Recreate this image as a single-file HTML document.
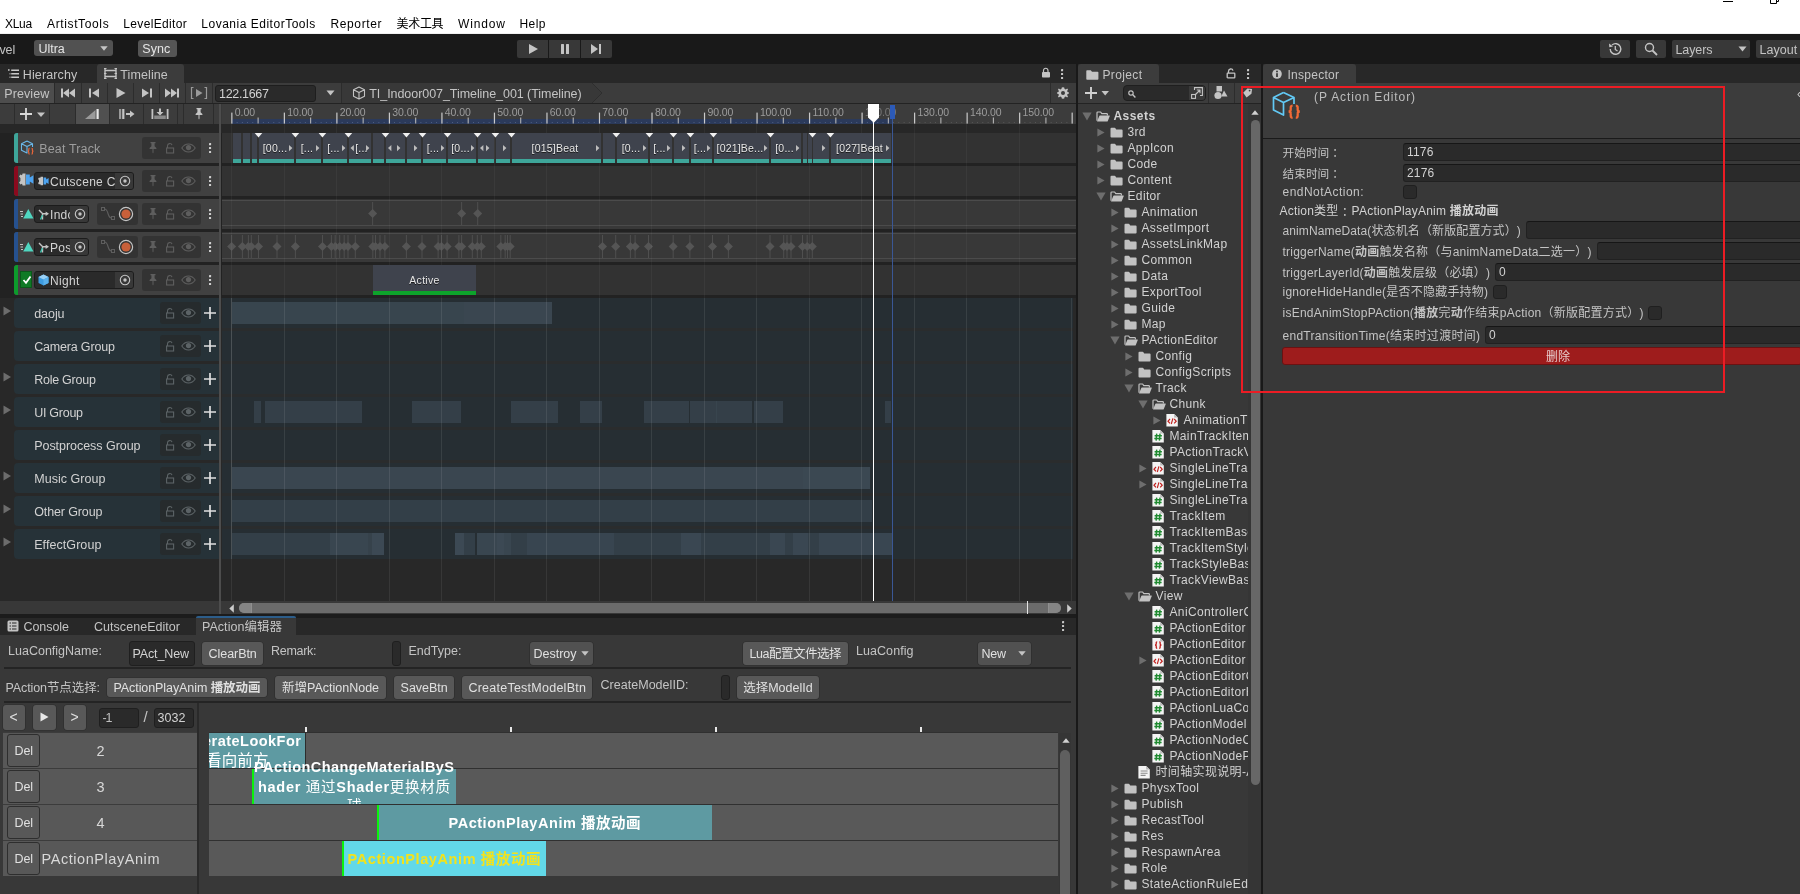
<!DOCTYPE html><html><head><meta charset="utf-8"><title>Unity</title><style>
*{box-sizing:border-box;margin:0;padding:0}
html,body{width:1800px;height:894px;overflow:hidden;background:#383838}
body{position:relative;will-change:transform;text-spacing-trim:space-all;font-family:"Liberation Sans","Noto Sans CJK SC",sans-serif;font-size:12px;color:#c8c8c8}
div,span.t,svg{position:absolute}
svg{overflow:visible}
span.t{white-space:nowrap;display:block}
.btn{background:#585858;border-radius:3px;border:1px solid #303030;color:#e4e4e4;text-align:center;white-space:nowrap;overflow:hidden}
.fld{background:#2a2a2a;border-radius:3px;border:1px solid #212121;color:#d2d2d2;white-space:nowrap;overflow:hidden}
</style></head><body>
<div style="left:0px;top:0px;width:1800px;height:34px;background:#ffffff;border-bottom:1px solid #f0f0f0"></div>
<span class="t" style="left:5px;top:16px;font-size:12px;line-height:16px;color:#000000;letter-spacing:-0.28px;">XLua</span>
<span class="t" style="left:47px;top:16px;font-size:12px;line-height:16px;color:#000000;letter-spacing:0.63px;">ArtistTools</span>
<span class="t" style="left:123.3px;top:16px;font-size:12px;line-height:16px;color:#000000;letter-spacing:0.33px;">LevelEditor</span>
<span class="t" style="left:201.3px;top:16px;font-size:12px;line-height:16px;color:#000000;letter-spacing:0.51px;">Lovania EditorTools</span>
<span class="t" style="left:330.5px;top:16px;font-size:12px;line-height:16px;color:#000000;letter-spacing:0.62px;">Reporter</span>
<span class="t" style="left:396.6px;top:16px;font-size:12px;line-height:16px;color:#000000;letter-spacing:-0.34px;">美术工具</span>
<span class="t" style="left:458px;top:16px;font-size:12px;line-height:16px;color:#000000;letter-spacing:0.86px;">Window</span>
<span class="t" style="left:519.5px;top:16px;font-size:12px;line-height:16px;color:#000000;letter-spacing:0.44px;">Help</span>
<div style="left:1723px;top:1px;width:10px;height:1.2px;background:#000;"></div>
<svg style="left:1764.5px;top:-2.5px;" width="14" height="8" viewBox="0 0 14 8"><path d="M5.5 0 V5.5 H11.5 V0 M8 0 H13.5 V3.5 H11.5" fill="none" stroke="#000" stroke-width="1"/></svg>
<div style="left:0px;top:34px;width:1800px;height:30px;background:#191919;"></div>
<span class="t" style="left:-14.3px;top:41.5px;font-size:12.5px;line-height:16px;color:#c4c4c4;letter-spacing:-0.10px;">Level</span>
<div style="left:34.3px;top:40px;width:79px;height:16.3px;background:#515151;border-radius:3px"></div>
<span class="t" style="left:38.5px;top:40.5px;font-size:12.5px;line-height:16px;color:#e4e4e4;letter-spacing:-0.03px;">Ultra</span>
<svg style="left:100px;top:46px;" width="8" height="5" viewBox="0 0 8 5"><path d="M0.3 0.3 H7.7 L4 4.7Z" fill="#c4c4c4"/></svg>
<div style="left:137.5px;top:40px;width:39.8px;height:17px;background:#555555;border-radius:3px"></div>
<span class="t" style="left:142.3px;top:41px;font-size:12.5px;line-height:16px;color:#e4e4e4;letter-spacing:0.07px;">Sync</span>
<div style="left:517px;top:40px;width:31px;height:18px;background:#383838;border-radius:2px 0 0 2px"></div>
<div style="left:549px;top:40px;width:31px;height:18px;background:#383838;border-radius:0"></div>
<div style="left:581px;top:40px;width:31px;height:18px;background:#383838;border-radius:0 2px 2px 0"></div>
<svg style="left:527px;top:43px;" width="12" height="12" viewBox="0 0 12 12"><path d="M2 1 L11 6 L2 11Z" fill="#c4c4c4"/></svg>
<svg style="left:559px;top:43px;" width="12" height="12" viewBox="0 0 12 12"><rect x="2" y="1" width="3" height="10" rx="0.5" fill="#c4c4c4"/><rect x="7" y="1" width="3" height="10" rx="0.5" fill="#c4c4c4"/></svg>
<svg style="left:590px;top:43px;" width="13" height="12" viewBox="0 0 13 12"><path d="M1 1 L8 6 L1 11Z" fill="#c4c4c4"/><rect x="9" y="1" width="2" height="10" fill="#c4c4c4"/></svg>
<div style="left:1600px;top:40px;width:30px;height:18px;background:#383838;border-radius:2px"></div>
<svg style="left:1607px;top:41px;" width="16" height="16" viewBox="0 0 16 16"><path d="M3.2 8 A5.3 5.3 0 1 0 5 4" fill="none" stroke="#c4c4c4" stroke-width="1.4"/><path d="M2 2.5 L2.3 6.3 L6 5.5Z" fill="#c4c4c4"/><path d="M8.3 5 V8.5 L10.5 10" fill="none" stroke="#c4c4c4" stroke-width="1.3"/></svg>
<div style="left:1636px;top:40px;width:30px;height:18px;background:#383838;border-radius:2px"></div>
<svg style="left:1643px;top:41px;" width="16" height="16" viewBox="0 0 16 16"><circle cx="6.5" cy="6.5" r="4" fill="none" stroke="#c4c4c4" stroke-width="1.4"/><path d="M9.5 9.5 L14 14" stroke="#c4c4c4" stroke-width="1.8"/></svg>
<div style="left:1672px;top:40px;width:78px;height:18px;background:#383838;border-radius:2px"><span class="t" style="left:3.4px;top:1.5px;font-size:12.5px;line-height:16px;color:#c4c4c4;letter-spacing:-0.07px;">Layers</span><svg style="left:66px;top:6px;" width="9" height="6" viewBox="0 0 9 6"><path d="M0.5 0.5 H8.5 L4.5 5.5Z" fill="#c4c4c4"/></svg></div>
<div style="left:1756px;top:40px;width:50px;height:18px;background:#383838;border-radius:2px"><span class="t" style="left:3.4px;top:1.5px;font-size:12.5px;line-height:16px;color:#c4c4c4;letter-spacing:0.05px;">Layout</span></div>
<div style="left:0px;top:64px;width:1076px;height:19px;background:#282828;"></div>
<div style="left:1076px;top:64px;width:3px;height:830px;background:#191919;"></div>
<svg style="left:7.5px;top:69px;" width="12" height="10" viewBox="0 0 12 10"><path d="M0 1 H1.6 M3.2 1.3 H11 M3.2 4.8 H11 M3.2 8.3 H11 M1.6 4.8 H2.4 M1.6 8.3 H2.4" stroke="#c8c8c8" stroke-width="1.45"/></svg>
<span class="t" style="left:22.8px;top:67px;font-size:12.5px;line-height:16px;color:#c4c4c4;letter-spacing:0.12px;">Hierarchy</span>
<div style="left:97px;top:64px;width:87px;height:19px;background:#3c3c3c;border-radius:3px 3px 0 0"></div>
<svg style="left:104px;top:68px;" width="13" height="11" viewBox="0 0 13 11"><path d="M1 0 V11 M12 0 V11 M1 2.5 H12 M1 8.5 H12" stroke="#c4c4c4" stroke-width="1.4" fill="none"/><path d="M0 0.5 H2.5 M0 5.5 H2.5 M0 10.5 H2.5 M10.5 0.5 H13 M10.5 5.5 H13 M10.5 10.5 H13" stroke="#c4c4c4" stroke-width="1"/></svg>
<span class="t" style="left:120.3px;top:67px;font-size:12.5px;line-height:16px;color:#c4c4c4;letter-spacing:0.10px;">Timeline</span>
<svg style="left:1041px;top:67px;" width="10" height="11" viewBox="0 0 10 11"><path d="M2.5 5 V3.5 A2.2 2.2 0 0 1 7 3.5 V5" fill="none" stroke="#c4c4c4" stroke-width="1.2"/><rect x="1" y="5" width="8" height="5.5" rx="0.8" fill="#c4c4c4"/></svg>
<svg style="left:1061px;top:68.5px;" width="3" height="11" viewBox="0 0 3 11"><rect x="0" y="0.1" width="2.1" height="2.1" rx="0.3" fill="#c4c4c4"/><rect x="0" y="4" width="2.1" height="2.1" rx="0.3" fill="#c4c4c4"/><rect x="0" y="7.9" width="2.1" height="2.1" rx="0.3" fill="#c4c4c4"/></svg>
<div style="left:0px;top:83px;width:1076px;height:21px;background:#3c3c3c;border-bottom:1px solid #232323"></div>
<div style="left:0px;top:83px;width:55px;height:20px;background:#4d4d4d;border-right:1px solid #2a2a2a"></div>
<span class="t" style="left:4.3px;top:85.5px;font-size:12.5px;line-height:16px;color:#c4c4c4;letter-spacing:0.09px;">Preview</span>
<div style="left:81px;top:83px;width:1px;height:20px;background:#2c2c2c;"></div>
<div style="left:107px;top:83px;width:1px;height:20px;background:#2c2c2c;"></div>
<div style="left:133px;top:83px;width:1px;height:20px;background:#2c2c2c;"></div>
<div style="left:159px;top:83px;width:1px;height:20px;background:#2c2c2c;"></div>
<div style="left:185px;top:83px;width:1px;height:20px;background:#2c2c2c;"></div>
<div style="left:212px;top:83px;width:1px;height:20px;background:#2c2c2c;"></div>
<svg style="left:60px;top:87px;" width="16" height="12" viewBox="0 0 16 12"><rect x="1" y="1.5" width="2" height="9" fill="#c4c4c4"/><path d="M9 1.5 V10.5 L3 6Z M15 1.5 V10.5 L9 6Z" fill="#c4c4c4"/></svg>
<svg style="left:88px;top:87px;" width="13" height="12" viewBox="0 0 13 12"><rect x="1" y="1.5" width="2" height="9" fill="#c4c4c4"/><path d="M11 1.5 V10.5 L4 6Z" fill="#c4c4c4"/></svg>
<svg style="left:115px;top:87px;" width="12" height="12" viewBox="0 0 12 12"><path d="M1.5 1 L10.5 6 L1.5 11Z" fill="#c4c4c4"/></svg>
<svg style="left:140px;top:87px;" width="13" height="12" viewBox="0 0 13 12"><path d="M2 1.5 V10.5 L9 6Z" fill="#c4c4c4"/><rect x="10" y="1.5" width="2" height="9" fill="#c4c4c4"/></svg>
<svg style="left:164px;top:87px;" width="16" height="12" viewBox="0 0 16 12"><path d="M1 1.5 V10.5 L7 6Z M7 1.5 V10.5 L13 6Z" fill="#c4c4c4"/><rect x="13" y="1.5" width="2" height="9" fill="#c4c4c4"/></svg>
<svg style="left:190px;top:86px;" width="18" height="14" viewBox="0 0 18 14"><path d="M3.5 1.5 H1.5 V12.5 H3.5 M14.5 1.5 H16.5 V12.5 H14.5" fill="none" stroke="#9a9a9a" stroke-width="1.2"/><path d="M6 3 V11 L12.5 7Z" fill="#9a9a9a"/></svg>
<div style="left:215px;top:85px;width:100.5px;height:17px;background:#2a2a2a;border-radius:3px;border:1px solid #1e1e1e"><span class="t" style="left:3px;top:-0.5px;font-size:12.5px;line-height:16px;color:#d2d2d2;letter-spacing:-0.31px;">122.1667</span></div>
<svg style="left:326px;top:90px;" width="9" height="6" viewBox="0 0 9 6"><path d="M0.5 0.5 H8.5 L4.5 5.5Z" fill="#c4c4c4"/></svg>
<div style="left:341px;top:83px;width:1px;height:20px;background:#2c2c2c;"></div>
<svg style="left:342px;top:83px;" width="262" height="20" viewBox="0 0 262 20"><path d="M0 0 H250 L260 10 L250 20 H0Z" fill="#383838"/><path d="M250 0 L260 10 L250 20" fill="none" stroke="#2e2e2e" stroke-width="1"/></svg>
<svg style="left:352px;top:86px;" width="14" height="14" viewBox="0 0 14 14"><path d="M7 1 L12.5 3.8 V10.2 L7 13 L1.5 10.2 V3.8Z M1.5 3.8 L7 6.6 L12.5 3.8 M7 6.6 V13" fill="none" stroke="#c4c4c4" stroke-width="1.1" stroke-linejoin="round"/></svg>
<span class="t" style="left:369.3px;top:85.5px;font-size:12.5px;line-height:16px;color:#c4c4c4;letter-spacing:-0.06px;">TI_Indoor007_Timeline_001 (Timeline)</span>
<div style="left:1050px;top:83px;width:1px;height:20px;background:#2c2c2c;"></div>
<svg style="left:1057px;top:87px;" width="12" height="12" viewBox="0 0 12 12"><path d="M6 0.3 L7.2 0.4 L7.6 2 L8.8 2.5 L10.2 1.6 L11 2.5 L10.1 3.9 L10.6 5 L12 5.4 V6.6 L10.6 7 L10.1 8.1 L11 9.5 L10.2 10.4 L8.8 9.5 L7.6 10 L7.2 11.6 L6 11.7 L4.8 11.6 L4.4 10 L3.2 9.5 L1.8 10.4 L1 9.5 L1.9 8.1 L1.4 7 L0 6.6 V5.4 L1.4 5 L1.9 3.9 L1 2.5 L1.8 1.6 L3.2 2.5 L4.4 2 L4.8 0.4Z" fill="#c4c4c4"/><circle cx="6" cy="6" r="2" fill="#3c3c3c"/></svg>
<div style="left:0px;top:104px;width:220px;height:20px;background:#3c3c3c;"></div>
<div style="left:14px;top:104px;width:1px;height:20px;background:#2c2c2c;"></div>
<div style="left:49px;top:104px;width:1px;height:20px;background:#2c2c2c;"></div>
<div style="left:75px;top:104px;width:1px;height:20px;background:#2c2c2c;"></div>
<div style="left:109px;top:104px;width:1px;height:20px;background:#2c2c2c;"></div>
<div style="left:143px;top:104px;width:1px;height:20px;background:#2c2c2c;"></div>
<div style="left:177px;top:104px;width:1px;height:20px;background:#2c2c2c;"></div>
<div style="left:183px;top:104px;width:1px;height:20px;background:#2c2c2c;"></div>
<div style="left:213px;top:104px;width:1px;height:20px;background:#2c2c2c;"></div>
<div style="left:76px;top:104px;width:33px;height:20px;background:#505050;"></div>
<svg style="left:19px;top:107px;" width="30" height="14" viewBox="0 0 30 14"><path d="M1 7 H13 M7 1 V13" stroke="#d8d8d8" stroke-width="1.8"/><path d="M18 5.5 H26 L22 10Z" fill="#c4c4c4"/></svg>
<svg style="left:84px;top:107px;" width="16" height="14" viewBox="0 0 16 14"><path d="M1 12 L11.5 3 V12Z" fill="#9a9a9a"/><rect x="12.5" y="2" width="2.2" height="10" fill="#e8e8e8"/></svg>
<svg style="left:118px;top:107px;" width="18" height="14" viewBox="0 0 18 14"><rect x="1" y="2" width="2.2" height="10" fill="#9a9a9a"/><rect x="4.2" y="2" width="2.2" height="10" fill="#c4c4c4"/><path d="M8 6 H12 V3.5 L16.5 7 L12 10.5 V8 H8Z" fill="#c4c4c4"/></svg>
<svg style="left:151px;top:107px;" width="18" height="14" viewBox="0 0 18 14"><rect x="0.5" y="2" width="1.8" height="10" fill="#c4c4c4"/><rect x="15.7" y="2" width="1.8" height="10" fill="#c4c4c4"/><rect x="3.2" y="8.5" width="11.6" height="3.5" fill="#8a8a8a"/><path d="M8 1.5 H10 V5 H12.5 L9 8.5 L5.5 5 H8Z" fill="#c4c4c4"/></svg>
<svg style="left:193px;top:107.3px;" width="12" height="14" viewBox="0 0 12 14"><path d="M3.5 1 H8.5 V2.2 H7.6 V5.2 L9.4 7 V8 H6.5 V11.5 L6 12.5 L5.5 11.5 V8 H2.6 V7 L4.4 5.2 V2.2 H3.5Z" fill="#c4c4c4"/></svg>
<div style="left:0px;top:124px;width:1076px;height:490px;background:#282828;"></div>
<div style="left:222px;top:104px;width:854px;height:20px;background:#3c3c3c;"></div>
<div style="left:232px;top:119px;width:660px;height:5px;background:#2b3a5b;"></div>
<svg style="left:222px;top:104px;" width="854" height="20" viewBox="0 0 854 20"><rect x="14.7" y="18" width="0.8" height="1" fill="#56668a"/><rect x="19.9" y="18" width="0.8" height="1" fill="#56668a"/><rect x="25.2" y="18" width="0.8" height="1" fill="#56668a"/><rect x="30.4" y="18" width="0.8" height="1" fill="#56668a"/><rect x="40.9" y="18" width="0.8" height="1" fill="#56668a"/><rect x="46.2" y="18" width="0.8" height="1" fill="#56668a"/><rect x="51.4" y="18" width="0.8" height="1" fill="#56668a"/><rect x="56.7" y="18" width="0.8" height="1" fill="#56668a"/><rect x="67.2" y="18" width="0.8" height="1" fill="#56668a"/><rect x="72.4" y="18" width="0.8" height="1" fill="#56668a"/><rect x="77.7" y="18" width="0.8" height="1" fill="#56668a"/><rect x="82.9" y="18" width="0.8" height="1" fill="#56668a"/><rect x="93.4" y="18" width="0.8" height="1" fill="#56668a"/><rect x="98.7" y="18" width="0.8" height="1" fill="#56668a"/><rect x="103.9" y="18" width="0.8" height="1" fill="#56668a"/><rect x="109.2" y="18" width="0.8" height="1" fill="#56668a"/><rect x="119.7" y="18" width="0.8" height="1" fill="#56668a"/><rect x="124.9" y="18" width="0.8" height="1" fill="#56668a"/><rect x="130.2" y="18" width="0.8" height="1" fill="#56668a"/><rect x="135.4" y="18" width="0.8" height="1" fill="#56668a"/><rect x="146.0" y="18" width="0.8" height="1" fill="#56668a"/><rect x="151.2" y="18" width="0.8" height="1" fill="#56668a"/><rect x="156.5" y="18" width="0.8" height="1" fill="#56668a"/><rect x="161.7" y="18" width="0.8" height="1" fill="#56668a"/><rect x="172.2" y="18" width="0.8" height="1" fill="#56668a"/><rect x="177.5" y="18" width="0.8" height="1" fill="#56668a"/><rect x="182.7" y="18" width="0.8" height="1" fill="#56668a"/><rect x="188.0" y="18" width="0.8" height="1" fill="#56668a"/><rect x="198.5" y="18" width="0.8" height="1" fill="#56668a"/><rect x="203.7" y="18" width="0.8" height="1" fill="#56668a"/><rect x="209.0" y="18" width="0.8" height="1" fill="#56668a"/><rect x="214.2" y="18" width="0.8" height="1" fill="#56668a"/><rect x="224.7" y="18" width="0.8" height="1" fill="#56668a"/><rect x="230.0" y="18" width="0.8" height="1" fill="#56668a"/><rect x="235.2" y="18" width="0.8" height="1" fill="#56668a"/><rect x="240.5" y="18" width="0.8" height="1" fill="#56668a"/><rect x="251.0" y="18" width="0.8" height="1" fill="#56668a"/><rect x="256.2" y="18" width="0.8" height="1" fill="#56668a"/><rect x="261.5" y="18" width="0.8" height="1" fill="#56668a"/><rect x="266.7" y="18" width="0.8" height="1" fill="#56668a"/><rect x="277.3" y="18" width="0.8" height="1" fill="#56668a"/><rect x="282.5" y="18" width="0.8" height="1" fill="#56668a"/><rect x="287.8" y="18" width="0.8" height="1" fill="#56668a"/><rect x="293.0" y="18" width="0.8" height="1" fill="#56668a"/><rect x="303.5" y="18" width="0.8" height="1" fill="#56668a"/><rect x="308.8" y="18" width="0.8" height="1" fill="#56668a"/><rect x="314.0" y="18" width="0.8" height="1" fill="#56668a"/><rect x="319.3" y="18" width="0.8" height="1" fill="#56668a"/><rect x="329.8" y="18" width="0.8" height="1" fill="#56668a"/><rect x="335.0" y="18" width="0.8" height="1" fill="#56668a"/><rect x="340.3" y="18" width="0.8" height="1" fill="#56668a"/><rect x="345.5" y="18" width="0.8" height="1" fill="#56668a"/><rect x="356.0" y="18" width="0.8" height="1" fill="#56668a"/><rect x="361.3" y="18" width="0.8" height="1" fill="#56668a"/><rect x="366.5" y="18" width="0.8" height="1" fill="#56668a"/><rect x="371.8" y="18" width="0.8" height="1" fill="#56668a"/><rect x="382.3" y="18" width="0.8" height="1" fill="#56668a"/><rect x="387.5" y="18" width="0.8" height="1" fill="#56668a"/><rect x="392.8" y="18" width="0.8" height="1" fill="#56668a"/><rect x="398.0" y="18" width="0.8" height="1" fill="#56668a"/><rect x="408.6" y="18" width="0.8" height="1" fill="#56668a"/><rect x="413.8" y="18" width="0.8" height="1" fill="#56668a"/><rect x="419.1" y="18" width="0.8" height="1" fill="#56668a"/><rect x="424.3" y="18" width="0.8" height="1" fill="#56668a"/><rect x="434.8" y="18" width="0.8" height="1" fill="#56668a"/><rect x="440.1" y="18" width="0.8" height="1" fill="#56668a"/><rect x="445.3" y="18" width="0.8" height="1" fill="#56668a"/><rect x="450.6" y="18" width="0.8" height="1" fill="#56668a"/><rect x="461.1" y="18" width="0.8" height="1" fill="#56668a"/><rect x="466.3" y="18" width="0.8" height="1" fill="#56668a"/><rect x="471.6" y="18" width="0.8" height="1" fill="#56668a"/><rect x="476.8" y="18" width="0.8" height="1" fill="#56668a"/><rect x="487.3" y="18" width="0.8" height="1" fill="#56668a"/><rect x="492.6" y="18" width="0.8" height="1" fill="#56668a"/><rect x="497.8" y="18" width="0.8" height="1" fill="#56668a"/><rect x="503.1" y="18" width="0.8" height="1" fill="#56668a"/><rect x="513.6" y="18" width="0.8" height="1" fill="#56668a"/><rect x="518.8" y="18" width="0.8" height="1" fill="#56668a"/><rect x="524.1" y="18" width="0.8" height="1" fill="#56668a"/><rect x="529.3" y="18" width="0.8" height="1" fill="#56668a"/><rect x="539.9" y="18" width="0.8" height="1" fill="#56668a"/><rect x="545.1" y="18" width="0.8" height="1" fill="#56668a"/><rect x="550.4" y="18" width="0.8" height="1" fill="#56668a"/><rect x="555.6" y="18" width="0.8" height="1" fill="#56668a"/><rect x="566.1" y="18" width="0.8" height="1" fill="#56668a"/><rect x="571.4" y="18" width="0.8" height="1" fill="#56668a"/><rect x="576.6" y="18" width="0.8" height="1" fill="#56668a"/><rect x="581.9" y="18" width="0.8" height="1" fill="#56668a"/><rect x="592.4" y="18" width="0.8" height="1" fill="#56668a"/><rect x="597.6" y="18" width="0.8" height="1" fill="#56668a"/><rect x="602.9" y="18" width="0.8" height="1" fill="#56668a"/><rect x="608.1" y="18" width="0.8" height="1" fill="#56668a"/><rect x="618.6" y="18" width="0.8" height="1" fill="#56668a"/><rect x="623.9" y="18" width="0.8" height="1" fill="#56668a"/><rect x="629.1" y="18" width="0.8" height="1" fill="#56668a"/><rect x="634.4" y="18" width="0.8" height="1" fill="#56668a"/><rect x="644.9" y="18" width="0.8" height="1" fill="#56668a"/><rect x="650.1" y="18" width="0.8" height="1" fill="#56668a"/><rect x="655.4" y="18" width="0.8" height="1" fill="#56668a"/><rect x="660.6" y="18" width="0.8" height="1" fill="#56668a"/><rect x="671.2" y="18" width="0.8" height="1" fill="#5c5c5c"/><rect x="676.4" y="18" width="0.8" height="1" fill="#5c5c5c"/><rect x="681.7" y="18" width="0.8" height="1" fill="#5c5c5c"/><rect x="686.9" y="18" width="0.8" height="1" fill="#5c5c5c"/><rect x="697.4" y="18" width="0.8" height="1" fill="#5c5c5c"/><rect x="702.7" y="18" width="0.8" height="1" fill="#5c5c5c"/><rect x="707.9" y="18" width="0.8" height="1" fill="#5c5c5c"/><rect x="713.2" y="18" width="0.8" height="1" fill="#5c5c5c"/><rect x="723.7" y="18" width="0.8" height="1" fill="#5c5c5c"/><rect x="728.9" y="18" width="0.8" height="1" fill="#5c5c5c"/><rect x="734.2" y="18" width="0.8" height="1" fill="#5c5c5c"/><rect x="739.4" y="18" width="0.8" height="1" fill="#5c5c5c"/><rect x="749.9" y="18" width="0.8" height="1" fill="#5c5c5c"/><rect x="755.2" y="18" width="0.8" height="1" fill="#5c5c5c"/><rect x="760.4" y="18" width="0.8" height="1" fill="#5c5c5c"/><rect x="765.7" y="18" width="0.8" height="1" fill="#5c5c5c"/><rect x="776.2" y="18" width="0.8" height="1" fill="#5c5c5c"/><rect x="781.4" y="18" width="0.8" height="1" fill="#5c5c5c"/><rect x="786.7" y="18" width="0.8" height="1" fill="#5c5c5c"/><rect x="791.9" y="18" width="0.8" height="1" fill="#5c5c5c"/><rect x="802.5" y="18" width="0.8" height="1" fill="#5c5c5c"/><rect x="807.7" y="18" width="0.8" height="1" fill="#5c5c5c"/><rect x="813.0" y="18" width="0.8" height="1" fill="#5c5c5c"/><rect x="818.2" y="18" width="0.8" height="1" fill="#5c5c5c"/><rect x="828.7" y="18" width="0.8" height="1" fill="#5c5c5c"/><rect x="834.0" y="18" width="0.8" height="1" fill="#5c5c5c"/><rect x="839.2" y="18" width="0.8" height="1" fill="#5c5c5c"/><rect x="844.5" y="18" width="0.8" height="1" fill="#5c5c5c"/><rect x="9.25" y="8.6" width="1.2" height="11" fill="#cacaca"/><rect x="35.56" y="13.5" width="1.1" height="6" fill="#b4b4b4"/><rect x="61.77" y="8.6" width="1.2" height="11" fill="#cacaca"/><rect x="88.08" y="13.5" width="1.1" height="6" fill="#b4b4b4"/><rect x="114.29" y="8.6" width="1.2" height="11" fill="#cacaca"/><rect x="140.60" y="13.5" width="1.1" height="6" fill="#b4b4b4"/><rect x="166.81" y="8.6" width="1.2" height="11" fill="#cacaca"/><rect x="193.12" y="13.5" width="1.1" height="6" fill="#b4b4b4"/><rect x="219.33" y="8.6" width="1.2" height="11" fill="#cacaca"/><rect x="245.64" y="13.5" width="1.1" height="6" fill="#b4b4b4"/><rect x="271.85" y="8.6" width="1.2" height="11" fill="#cacaca"/><rect x="298.16" y="13.5" width="1.1" height="6" fill="#b4b4b4"/><rect x="324.37" y="8.6" width="1.2" height="11" fill="#cacaca"/><rect x="350.68" y="13.5" width="1.1" height="6" fill="#b4b4b4"/><rect x="376.89" y="8.6" width="1.2" height="11" fill="#cacaca"/><rect x="403.20" y="13.5" width="1.1" height="6" fill="#b4b4b4"/><rect x="429.41" y="8.6" width="1.2" height="11" fill="#cacaca"/><rect x="455.72" y="13.5" width="1.1" height="6" fill="#b4b4b4"/><rect x="481.93" y="8.6" width="1.2" height="11" fill="#cacaca"/><rect x="508.24" y="13.5" width="1.1" height="6" fill="#b4b4b4"/><rect x="534.45" y="8.6" width="1.2" height="11" fill="#cacaca"/><rect x="560.76" y="13.5" width="1.1" height="6" fill="#b4b4b4"/><rect x="586.97" y="8.6" width="1.2" height="11" fill="#cacaca"/><rect x="613.28" y="13.5" width="1.1" height="6" fill="#b4b4b4"/><rect x="639.49" y="8.6" width="1.2" height="11" fill="#cacaca"/><rect x="665.80" y="13.5" width="1.1" height="6" fill="#b4b4b4"/><rect x="692.01" y="8.6" width="1.2" height="11" fill="#cacaca"/><rect x="718.32" y="13.5" width="1.1" height="6" fill="#b4b4b4"/><rect x="744.53" y="8.6" width="1.2" height="11" fill="#cacaca"/><rect x="770.84" y="13.5" width="1.1" height="6" fill="#b4b4b4"/><rect x="797.05" y="8.6" width="1.2" height="11" fill="#cacaca"/><rect x="823.36" y="13.5" width="1.1" height="6" fill="#b4b4b4"/><rect x="849.57" y="8.6" width="1.2" height="11" fill="#cacaca"/></svg>
<span class="t" style="left:234.7px;top:106px;font-size:10.5px;line-height:12px;color:#9c9c9c;letter-spacing:0.02px;">0.00</span>
<span class="t" style="left:287.2px;top:106px;font-size:10.5px;line-height:12px;color:#9c9c9c;letter-spacing:-0.07px;">10.00</span>
<span class="t" style="left:339.7px;top:106px;font-size:10.5px;line-height:12px;color:#9c9c9c;letter-spacing:-0.07px;">20.00</span>
<span class="t" style="left:392.3px;top:106px;font-size:10.5px;line-height:12px;color:#9c9c9c;letter-spacing:-0.07px;">30.00</span>
<span class="t" style="left:444.8px;top:106px;font-size:10.5px;line-height:12px;color:#9c9c9c;letter-spacing:-0.07px;">40.00</span>
<span class="t" style="left:497.3px;top:106px;font-size:10.5px;line-height:12px;color:#9c9c9c;letter-spacing:-0.07px;">50.00</span>
<span class="t" style="left:549.8px;top:106px;font-size:10.5px;line-height:12px;color:#9c9c9c;letter-spacing:-0.07px;">60.00</span>
<span class="t" style="left:602.3px;top:106px;font-size:10.5px;line-height:12px;color:#9c9c9c;letter-spacing:-0.07px;">70.00</span>
<span class="t" style="left:654.9px;top:106px;font-size:10.5px;line-height:12px;color:#9c9c9c;letter-spacing:-0.07px;">80.00</span>
<span class="t" style="left:707.4px;top:106px;font-size:10.5px;line-height:12px;color:#9c9c9c;letter-spacing:-0.07px;">90.00</span>
<span class="t" style="left:759.9px;top:106px;font-size:10.5px;line-height:12px;color:#9c9c9c;letter-spacing:-0.12px;">100.00</span>
<span class="t" style="left:812.4px;top:106px;font-size:10.5px;line-height:12px;color:#9c9c9c;letter-spacing:0.03px;">110.00</span>
<span class="t" style="left:917.5px;top:106px;font-size:10.5px;line-height:12px;color:#9c9c9c;letter-spacing:-0.12px;">130.00</span>
<span class="t" style="left:970.0px;top:106px;font-size:10.5px;line-height:12px;color:#9c9c9c;letter-spacing:-0.12px;">140.00</span>
<span class="t" style="left:1022.5px;top:106px;font-size:10.5px;line-height:12px;color:#9c9c9c;letter-spacing:-0.12px;">150.00</span>
<span class="t" style="left:864.9px;top:106px;font-size:10.5px;line-height:12px;color:#777;letter-spacing:-0.12px;">120.00</span>
<div style="left:0px;top:124px;width:1076px;height:9px;background:#272727;"></div>
<div style="left:0px;top:133px;width:1076px;height:165px;background:#222222;"></div>
<div style="left:14px;top:133px;width:206px;height:30px;background:#414141;border-radius:3px 0 0 3px"></div>
<div style="left:14px;top:133px;width:4px;height:30px;background:#3ea69a;border-radius:3px 0 0 3px"></div>
<div style="left:222px;top:133px;width:854px;height:30px;background:#323232;"></div>
<div style="left:142px;top:137px;width:59px;height:22px;background:#333333;border-radius:3px"></div>
<svg style="left:147px;top:141px;" width="12" height="14" viewBox="0 0 12 14"><path d="M3.5 1 H8.5 V2.2 H7.6 V5.2 L9.4 7 V8 H6.5 V11.5 L6 12.5 L5.5 11.5 V8 H2.6 V7 L4.4 5.2 V2.2 H3.5Z" fill="#5e5e5e"/></svg>
<svg style="left:164px;top:142px;" width="12" height="12" viewBox="0 0 12 12"><path d="M3.5 6 V3.8 A2.3 2.3 0 0 1 8 3.2" fill="none" stroke="#5e5e5e" stroke-width="1.1"/><rect x="2.6" y="6" width="7" height="5" fill="none" stroke="#5e5e5e" stroke-width="1.1"/></svg>
<svg style="left:181px;top:142px;" width="15" height="12" viewBox="0 0 15 12"><path d="M0.8 6 C3 2.6 5.5 2 7.5 2 C9.5 2 12 2.6 14.2 6 C12 9.4 9.5 10 7.5 10 C5.5 10 3 9.4 0.8 6Z" fill="none" stroke="#5e5e5e" stroke-width="1.1"/><circle cx="7.5" cy="5.6" r="2.6" fill="#5e5e5e"/></svg>
<svg style="left:208.5px;top:143.0px;" width="3" height="11" viewBox="0 0 3 11"><rect x="0" y="0.1" width="2.1" height="2.1" rx="0.3" fill="#d0d0d0"/><rect x="0" y="4" width="2.1" height="2.1" rx="0.3" fill="#d0d0d0"/><rect x="0" y="7.9" width="2.1" height="2.1" rx="0.3" fill="#d0d0d0"/></svg>
<div style="left:14px;top:166px;width:206px;height:30px;background:#414141;border-radius:3px 0 0 3px"></div>
<div style="left:14px;top:166px;width:4px;height:30px;background:#8a0a1e;border-radius:3px 0 0 3px"></div>
<div style="left:222px;top:166px;width:854px;height:30px;background:#323232;"></div>
<div style="left:142px;top:170px;width:59px;height:22px;background:#333333;border-radius:3px"></div>
<svg style="left:147px;top:174px;" width="12" height="14" viewBox="0 0 12 14"><path d="M3.5 1 H8.5 V2.2 H7.6 V5.2 L9.4 7 V8 H6.5 V11.5 L6 12.5 L5.5 11.5 V8 H2.6 V7 L4.4 5.2 V2.2 H3.5Z" fill="#5e5e5e"/></svg>
<svg style="left:164px;top:175px;" width="12" height="12" viewBox="0 0 12 12"><path d="M3.5 6 V3.8 A2.3 2.3 0 0 1 8 3.2" fill="none" stroke="#5e5e5e" stroke-width="1.1"/><rect x="2.6" y="6" width="7" height="5" fill="none" stroke="#5e5e5e" stroke-width="1.1"/></svg>
<svg style="left:181px;top:175px;" width="15" height="12" viewBox="0 0 15 12"><path d="M0.8 6 C3 2.6 5.5 2 7.5 2 C9.5 2 12 2.6 14.2 6 C12 9.4 9.5 10 7.5 10 C5.5 10 3 9.4 0.8 6Z" fill="none" stroke="#5e5e5e" stroke-width="1.1"/><circle cx="7.5" cy="5.6" r="2.6" fill="#5e5e5e"/></svg>
<svg style="left:208.5px;top:176.0px;" width="3" height="11" viewBox="0 0 3 11"><rect x="0" y="0.1" width="2.1" height="2.1" rx="0.3" fill="#d0d0d0"/><rect x="0" y="4" width="2.1" height="2.1" rx="0.3" fill="#d0d0d0"/><rect x="0" y="7.9" width="2.1" height="2.1" rx="0.3" fill="#d0d0d0"/></svg>
<div style="left:14px;top:199px;width:206px;height:30px;background:#414141;border-radius:3px 0 0 3px"></div>
<div style="left:14px;top:199px;width:4px;height:30px;background:#26518f;border-radius:3px 0 0 3px"></div>
<div style="left:222px;top:199px;width:854px;height:30px;background:#323232;"></div>
<div style="left:142px;top:203px;width:59px;height:22px;background:#333333;border-radius:3px"></div>
<svg style="left:147px;top:207px;" width="12" height="14" viewBox="0 0 12 14"><path d="M3.5 1 H8.5 V2.2 H7.6 V5.2 L9.4 7 V8 H6.5 V11.5 L6 12.5 L5.5 11.5 V8 H2.6 V7 L4.4 5.2 V2.2 H3.5Z" fill="#5e5e5e"/></svg>
<svg style="left:164px;top:208px;" width="12" height="12" viewBox="0 0 12 12"><path d="M3.5 6 V3.8 A2.3 2.3 0 0 1 8 3.2" fill="none" stroke="#5e5e5e" stroke-width="1.1"/><rect x="2.6" y="6" width="7" height="5" fill="none" stroke="#5e5e5e" stroke-width="1.1"/></svg>
<svg style="left:181px;top:208px;" width="15" height="12" viewBox="0 0 15 12"><path d="M0.8 6 C3 2.6 5.5 2 7.5 2 C9.5 2 12 2.6 14.2 6 C12 9.4 9.5 10 7.5 10 C5.5 10 3 9.4 0.8 6Z" fill="none" stroke="#5e5e5e" stroke-width="1.1"/><circle cx="7.5" cy="5.6" r="2.6" fill="#5e5e5e"/></svg>
<svg style="left:208.5px;top:209.0px;" width="3" height="11" viewBox="0 0 3 11"><rect x="0" y="0.1" width="2.1" height="2.1" rx="0.3" fill="#d0d0d0"/><rect x="0" y="4" width="2.1" height="2.1" rx="0.3" fill="#d0d0d0"/><rect x="0" y="7.9" width="2.1" height="2.1" rx="0.3" fill="#d0d0d0"/></svg>
<div style="left:14px;top:232px;width:206px;height:30px;background:#414141;border-radius:3px 0 0 3px"></div>
<div style="left:14px;top:232px;width:4px;height:30px;background:#26518f;border-radius:3px 0 0 3px"></div>
<div style="left:222px;top:232px;width:854px;height:30px;background:#323232;"></div>
<div style="left:142px;top:236px;width:59px;height:22px;background:#333333;border-radius:3px"></div>
<svg style="left:147px;top:240px;" width="12" height="14" viewBox="0 0 12 14"><path d="M3.5 1 H8.5 V2.2 H7.6 V5.2 L9.4 7 V8 H6.5 V11.5 L6 12.5 L5.5 11.5 V8 H2.6 V7 L4.4 5.2 V2.2 H3.5Z" fill="#5e5e5e"/></svg>
<svg style="left:164px;top:241px;" width="12" height="12" viewBox="0 0 12 12"><path d="M3.5 6 V3.8 A2.3 2.3 0 0 1 8 3.2" fill="none" stroke="#5e5e5e" stroke-width="1.1"/><rect x="2.6" y="6" width="7" height="5" fill="none" stroke="#5e5e5e" stroke-width="1.1"/></svg>
<svg style="left:181px;top:241px;" width="15" height="12" viewBox="0 0 15 12"><path d="M0.8 6 C3 2.6 5.5 2 7.5 2 C9.5 2 12 2.6 14.2 6 C12 9.4 9.5 10 7.5 10 C5.5 10 3 9.4 0.8 6Z" fill="none" stroke="#5e5e5e" stroke-width="1.1"/><circle cx="7.5" cy="5.6" r="2.6" fill="#5e5e5e"/></svg>
<svg style="left:208.5px;top:242.0px;" width="3" height="11" viewBox="0 0 3 11"><rect x="0" y="0.1" width="2.1" height="2.1" rx="0.3" fill="#d0d0d0"/><rect x="0" y="4" width="2.1" height="2.1" rx="0.3" fill="#d0d0d0"/><rect x="0" y="7.9" width="2.1" height="2.1" rx="0.3" fill="#d0d0d0"/></svg>
<div style="left:14px;top:265px;width:206px;height:30px;background:#414141;border-radius:3px 0 0 3px"></div>
<div style="left:14px;top:265px;width:4px;height:30px;background:#0d9b2c;border-radius:3px 0 0 3px"></div>
<div style="left:222px;top:265px;width:854px;height:30px;background:#323232;"></div>
<div style="left:142px;top:269px;width:59px;height:22px;background:#333333;border-radius:3px"></div>
<svg style="left:147px;top:273px;" width="12" height="14" viewBox="0 0 12 14"><path d="M3.5 1 H8.5 V2.2 H7.6 V5.2 L9.4 7 V8 H6.5 V11.5 L6 12.5 L5.5 11.5 V8 H2.6 V7 L4.4 5.2 V2.2 H3.5Z" fill="#5e5e5e"/></svg>
<svg style="left:164px;top:274px;" width="12" height="12" viewBox="0 0 12 12"><path d="M3.5 6 V3.8 A2.3 2.3 0 0 1 8 3.2" fill="none" stroke="#5e5e5e" stroke-width="1.1"/><rect x="2.6" y="6" width="7" height="5" fill="none" stroke="#5e5e5e" stroke-width="1.1"/></svg>
<svg style="left:181px;top:274px;" width="15" height="12" viewBox="0 0 15 12"><path d="M0.8 6 C3 2.6 5.5 2 7.5 2 C9.5 2 12 2.6 14.2 6 C12 9.4 9.5 10 7.5 10 C5.5 10 3 9.4 0.8 6Z" fill="none" stroke="#5e5e5e" stroke-width="1.1"/><circle cx="7.5" cy="5.6" r="2.6" fill="#5e5e5e"/></svg>
<svg style="left:208.5px;top:275.0px;" width="3" height="11" viewBox="0 0 3 11"><rect x="0" y="0.1" width="2.1" height="2.1" rx="0.3" fill="#d0d0d0"/><rect x="0" y="4" width="2.1" height="2.1" rx="0.3" fill="#d0d0d0"/><rect x="0" y="7.9" width="2.1" height="2.1" rx="0.3" fill="#d0d0d0"/></svg>
<div style="left:231px;top:124px;width:1px;height:174px;background:rgba(255,255,255,0.045);"></div>
<div style="left:284px;top:124px;width:1px;height:174px;background:rgba(255,255,255,0.045);"></div>
<div style="left:336px;top:124px;width:1px;height:174px;background:rgba(255,255,255,0.045);"></div>
<div style="left:389px;top:124px;width:1px;height:174px;background:rgba(255,255,255,0.045);"></div>
<div style="left:441px;top:124px;width:1px;height:174px;background:rgba(255,255,255,0.045);"></div>
<div style="left:494px;top:124px;width:1px;height:174px;background:rgba(255,255,255,0.045);"></div>
<div style="left:546px;top:124px;width:1px;height:174px;background:rgba(255,255,255,0.045);"></div>
<div style="left:599px;top:124px;width:1px;height:174px;background:rgba(255,255,255,0.045);"></div>
<div style="left:651px;top:124px;width:1px;height:174px;background:rgba(255,255,255,0.045);"></div>
<div style="left:704px;top:124px;width:1px;height:174px;background:rgba(255,255,255,0.045);"></div>
<div style="left:756px;top:124px;width:1px;height:174px;background:rgba(255,255,255,0.045);"></div>
<div style="left:809px;top:124px;width:1px;height:174px;background:rgba(255,255,255,0.045);"></div>
<div style="left:861px;top:124px;width:1px;height:174px;background:rgba(255,255,255,0.045);"></div>
<div style="left:914px;top:124px;width:1px;height:174px;background:rgba(255,255,255,0.045);"></div>
<div style="left:966px;top:124px;width:1px;height:174px;background:rgba(255,255,255,0.045);"></div>
<div style="left:1019px;top:124px;width:1px;height:174px;background:rgba(255,255,255,0.045);"></div>
<svg style="left:20px;top:140px;" width="16" height="17" viewBox="0 0 16 17"><path d="M7 1 L12.5 3.8 V7 M7 1 L1.5 3.8 V10.2 L7 13 V6.6 M1.5 3.8 L7 6.6 L12.5 3.8" fill="none" stroke="#6ab7e8" stroke-width="1.1" stroke-linejoin="round"/><path d="M9.6 8.3 C8.6 8.3 8.8 9.3 8.8 10.2 C8.8 11 8.2 11.2 7.8 11.2 C8.2 11.2 8.8 11.4 8.8 12.2 C8.8 13.1 8.6 14.1 9.6 14.1 M11.6 8.3 C12.6 8.3 12.4 9.3 12.4 10.2 C12.4 11 13 11.2 13.4 11.2 C13 11.2 12.4 11.4 12.4 12.2 C12.4 13.1 12.6 14.1 11.6 14.1" fill="none" stroke="#e8663a" stroke-width="1.2"/></svg>
<span class="t" style="left:39.3px;top:141px;font-size:12.5px;line-height:16px;color:#9d9d9d;letter-spacing:0.14px;">Beat Track</span>
<svg style="left:19px;top:172px;" width="15" height="15" viewBox="0 0 15 15"><path d="M6.5 1.5 H3.6 L3 3.2 L1.4 2.6 L0 4.6 L1.4 6 V9 L0 10.4 L1.4 12.4 L3 11.8 L3.6 13.5 H6.5Z" fill="#c4c4c4"/><path d="M7 2.5 H10.8 V5.6 L14.4 3.2 V11.8 L10.8 9.4 V12.5 H7Z" fill="#4da3f0"/></svg>
<div style="left:34px;top:172px;width:100px;height:18px;background:#2a2a2a;border-radius:3px;border:1px solid #1c1c1c;overflow:hidden"><div style="left:80px;top:0px;width:19px;height:16px;background:#383838;"></div><svg style="left:84px;top:2px;" width="12" height="12" viewBox="0 0 12 12"><circle cx="6" cy="6" r="4.7" fill="none" stroke="#c4c4c4" stroke-width="1.1"/><circle cx="6" cy="6" r="1.7" fill="#c4c4c4"/></svg><svg style="left:3px;top:3px;" width="11" height="10" viewBox="0 0 11 10"><path d="M5 0.8 H2.6 L2.2 2 L1 1.6 L0 3 L1 4 V6 L0 7 L1 8.4 L2.2 8 L2.6 9.2 H5Z" fill="#c4c4c4"/><path d="M5.5 1.5 H8.2 V3.6 L10.6 2 V8 L8.2 6.4 V8.5 H5.5Z" fill="#4da3f0"/></svg><span class="t" style="left:15px;top:1px;font-size:12px;line-height:16px;color:#d2d2d2;letter-spacing:0.3px;width:65px;overflow:hidden">Cutscene C</span></div>
<svg style="left:20px;top:208px;" width="14" height="12" viewBox="0 0 14 12"><path d="M0 3.5 H3 M0.5 6 H3 M1 8.5 H3" stroke="#c4c4c4" stroke-width="1"/><path d="M8.3 1 L13.5 10.5 H3.2Z" fill="#4fd6c0"/></svg>
<div style="left:34px;top:205px;width:55px;height:18px;background:#2a2a2a;border-radius:3px;border:1px solid #1c1c1c;overflow:hidden"><div style="left:35px;top:0px;width:19px;height:16px;background:#383838;"></div><svg style="left:39px;top:2px;" width="12" height="12" viewBox="0 0 12 12"><circle cx="6" cy="6" r="4.7" fill="none" stroke="#c4c4c4" stroke-width="1.1"/><circle cx="6" cy="6" r="1.7" fill="#c4c4c4"/></svg><svg style="left:3px;top:3px;" width="11" height="11" viewBox="0 0 11 11"><path d="M1 1 L4.5 4.6 V10.5" fill="none" stroke="#c4c4c4" stroke-width="1.4"/><path d="M4.5 4.8 H8" stroke="#c4c4c4" stroke-width="1.4"/><path d="M7.6 2.6 L11 4.8 L7.6 7Z" fill="#c4c4c4"/><path d="M4.5 6 L2.5 10.5" stroke="#41c9b4" stroke-width="1.4"/></svg><span class="t" style="left:15px;top:1px;font-size:12px;line-height:16px;color:#d2d2d2;letter-spacing:0.3px;width:20px;overflow:hidden">Indoor007</span></div>
<div style="left:97px;top:203px;width:41px;height:22px;background:#333333;border-radius:3px"></div>
<svg style="left:101px;top:207px;" width="14" height="14" viewBox="0 0 14 14"><rect x="0.5" y="0.5" width="3" height="3" fill="none" stroke="#5e5e5e" stroke-width="1"/><rect x="10.5" y="9.5" width="3" height="3" fill="none" stroke="#5e5e5e" stroke-width="1"/><path d="M3.5 2 C8 2 6 11 10.5 11" fill="none" stroke="#5e5e5e" stroke-width="1.1"/></svg>
<svg style="left:118px;top:206px;" width="16" height="16" viewBox="0 0 16 16"><circle cx="8" cy="8" r="6.6" fill="none" stroke="#c4c4c4" stroke-width="1.2"/><circle cx="8" cy="8" r="4.6" fill="#c8603a"/></svg>
<svg style="left:20px;top:241px;" width="14" height="12" viewBox="0 0 14 12"><path d="M0 3.5 H3 M0.5 6 H3 M1 8.5 H3" stroke="#c4c4c4" stroke-width="1"/><path d="M8.3 1 L13.5 10.5 H3.2Z" fill="#4fd6c0"/></svg>
<div style="left:34px;top:238px;width:55px;height:18px;background:#2a2a2a;border-radius:3px;border:1px solid #1c1c1c;overflow:hidden"><div style="left:35px;top:0px;width:19px;height:16px;background:#383838;"></div><svg style="left:39px;top:2px;" width="12" height="12" viewBox="0 0 12 12"><circle cx="6" cy="6" r="4.7" fill="none" stroke="#c4c4c4" stroke-width="1.1"/><circle cx="6" cy="6" r="1.7" fill="#c4c4c4"/></svg><svg style="left:3px;top:3px;" width="11" height="11" viewBox="0 0 11 11"><path d="M1 1 L4.5 4.6 V10.5" fill="none" stroke="#c4c4c4" stroke-width="1.4"/><path d="M4.5 4.8 H8" stroke="#c4c4c4" stroke-width="1.4"/><path d="M7.6 2.6 L11 4.8 L7.6 7Z" fill="#c4c4c4"/><path d="M4.5 6 L2.5 10.5" stroke="#41c9b4" stroke-width="1.4"/></svg><span class="t" style="left:15px;top:1px;font-size:12px;line-height:16px;color:#d2d2d2;letter-spacing:0.3px;width:20px;overflow:hidden">Position</span></div>
<div style="left:97px;top:236px;width:41px;height:22px;background:#333333;border-radius:3px"></div>
<svg style="left:101px;top:240px;" width="14" height="14" viewBox="0 0 14 14"><rect x="0.5" y="0.5" width="3" height="3" fill="none" stroke="#5e5e5e" stroke-width="1"/><rect x="10.5" y="9.5" width="3" height="3" fill="none" stroke="#5e5e5e" stroke-width="1"/><path d="M3.5 2 C8 2 6 11 10.5 11" fill="none" stroke="#5e5e5e" stroke-width="1.1"/></svg>
<svg style="left:118px;top:239px;" width="16" height="16" viewBox="0 0 16 16"><circle cx="8" cy="8" r="6.6" fill="none" stroke="#c4c4c4" stroke-width="1.2"/><circle cx="8" cy="8" r="4.6" fill="#c8603a"/></svg>
<div style="left:20px;top:271px;width:12px;height:17px;background:#0f7a25;border:1px solid #0a5a1a"><svg style="left:1px;top:3px;" width="10" height="10" viewBox="0 0 10 10"><path d="M1.5 5 L4 7.8 L8.5 1.5" fill="none" stroke="#fff" stroke-width="1.8"/></svg></div>
<div style="left:34px;top:271px;width:100px;height:18px;background:#2a2a2a;border-radius:3px;border:1px solid #1c1c1c;overflow:hidden"><div style="left:80px;top:0px;width:19px;height:16px;background:#383838;"></div><svg style="left:84px;top:2px;" width="12" height="12" viewBox="0 0 12 12"><circle cx="6" cy="6" r="4.7" fill="none" stroke="#c4c4c4" stroke-width="1.1"/><circle cx="6" cy="6" r="1.7" fill="#c4c4c4"/></svg><svg style="left:3px;top:2px;" width="11" height="12" viewBox="0 0 11 12"><path d="M5.5 0.5 L10.5 3 V9 L5.5 11.5 L0.5 9 V3Z" fill="#3d9be0"/><path d="M5.5 0.5 L10.5 3 L5.5 5.5 L0.5 3Z" fill="#9ad0f5"/><path d="M5.5 5.5 V11.5 L10.5 9 V3Z" fill="#5ab0ec"/></svg><span class="t" style="left:15px;top:1px;font-size:12px;line-height:16px;color:#d2d2d2;letter-spacing:0.3px;width:65px;overflow:hidden">Night</span></div>
<div style="left:233px;top:133px;width:8px;height:30px;background:#3f434d;border-bottom:4px solid #3ea69a"></div>
<div style="left:243px;top:133px;width:7px;height:30px;background:#3f434d;border-bottom:4px solid #3ea69a"></div>
<div style="left:252px;top:133px;width:5px;height:30px;background:#3f434d;border-bottom:4px solid #3ea69a"></div>
<div style="left:259px;top:133px;width:35px;height:30px;background:#3f434d;border-bottom:4px solid #3ea69a"></div>
<span class="t" style="left:259px;top:141px;width:32px;text-align:center;font-size:10.5px;line-height:14px;color:#e6e6e6;letter-spacing:0.2px;text-shadow:0 1px 0 #1a1a1a">[00...</span>
<svg style="left:259px;top:133px;" width="35" height="30" viewBox="0 0 35 30"><path d="M0 0 L3.4 3.1 L0 6.2Z" transform="translate(30,12)" fill="#bdbdbd"/></svg>
<div style="left:296px;top:133px;width:25px;height:30px;background:#3f434d;border-bottom:4px solid #3ea69a"></div>
<span class="t" style="left:296px;top:141px;width:22px;text-align:center;font-size:10.5px;line-height:14px;color:#e6e6e6;letter-spacing:0.2px;text-shadow:0 1px 0 #1a1a1a">[...</span>
<svg style="left:296px;top:133px;" width="25" height="30" viewBox="0 0 25 30"><path d="M0 0 L3.4 3.1 L0 6.2Z" transform="translate(20,12)" fill="#bdbdbd"/></svg>
<div style="left:323px;top:133px;width:24px;height:30px;background:#3f434d;border-bottom:4px solid #3ea69a"></div>
<span class="t" style="left:323px;top:141px;width:21px;text-align:center;font-size:10.5px;line-height:14px;color:#e6e6e6;letter-spacing:0.2px;text-shadow:0 1px 0 #1a1a1a">[...</span>
<svg style="left:323px;top:133px;" width="24" height="30" viewBox="0 0 24 30"><path d="M0 0 L3.4 3.1 L0 6.2Z" transform="translate(19,12)" fill="#bdbdbd"/></svg>
<div style="left:349px;top:133px;width:22px;height:30px;background:#3f434d;border-bottom:4px solid #3ea69a"></div>
<span class="t" style="left:352px;top:141px;width:19px;text-align:center;font-size:10.5px;line-height:14px;color:#e6e6e6;letter-spacing:0.2px;text-shadow:0 1px 0 #1a1a1a">[...</span>
<svg style="left:349px;top:133px;" width="22" height="30" viewBox="0 0 22 30"><path d="M3.4 0 L0 3.1 L3.4 6.2Z" transform="translate(1.5,12)" fill="#bdbdbd"/><path d="M0 0 L3.4 3.1 L0 6.2Z" transform="translate(17,12)" fill="#bdbdbd"/></svg>
<div style="left:373px;top:133px;width:11px;height:30px;background:#3f434d;border-bottom:4px solid #3ea69a"></div>
<div style="left:386px;top:133px;width:19px;height:30px;background:#3f434d;border-bottom:4px solid #3ea69a"></div>
<svg style="left:386px;top:133px;" width="19" height="30" viewBox="0 0 19 30"><path d="M3.4 0 L0 3.1 L3.4 6.2Z" transform="translate(2,12)" fill="#bdbdbd"/><path d="M0 0 L3.4 3.1 L0 6.2Z" transform="translate(11,12)" fill="#bdbdbd"/></svg>
<div style="left:407px;top:133px;width:14px;height:30px;background:#3f434d;border-bottom:4px solid #3ea69a"></div>
<svg style="left:407px;top:133px;" width="14" height="30" viewBox="0 0 14 30"><path d="M0 0 L3.4 3.1 L0 6.2Z" transform="translate(7,12)" fill="#bdbdbd"/></svg>
<div style="left:423px;top:133px;width:23px;height:30px;background:#3f434d;border-bottom:4px solid #3ea69a"></div>
<span class="t" style="left:423px;top:141px;width:20px;text-align:center;font-size:10.5px;line-height:14px;color:#e6e6e6;letter-spacing:0.2px;text-shadow:0 1px 0 #1a1a1a">[...</span>
<svg style="left:423px;top:133px;" width="23" height="30" viewBox="0 0 23 30"><path d="M0 0 L3.4 3.1 L0 6.2Z" transform="translate(18,12)" fill="#bdbdbd"/></svg>
<div style="left:448px;top:133px;width:28px;height:30px;background:#3f434d;border-bottom:4px solid #3ea69a"></div>
<span class="t" style="left:448px;top:141px;width:25px;text-align:center;font-size:10.5px;line-height:14px;color:#e6e6e6;letter-spacing:0.2px;text-shadow:0 1px 0 #1a1a1a">[0...</span>
<svg style="left:448px;top:133px;" width="28" height="30" viewBox="0 0 28 30"><path d="M0 0 L3.4 3.1 L0 6.2Z" transform="translate(23,12)" fill="#bdbdbd"/></svg>
<div style="left:478px;top:133px;width:16px;height:30px;background:#3f434d;border-bottom:4px solid #3ea69a"></div>
<svg style="left:478px;top:133px;" width="16" height="30" viewBox="0 0 16 30"><path d="M3.4 0 L0 3.1 L3.4 6.2Z" transform="translate(2,12)" fill="#bdbdbd"/><path d="M0 0 L3.4 3.1 L0 6.2Z" transform="translate(8,12)" fill="#bdbdbd"/></svg>
<div style="left:496px;top:133px;width:14px;height:30px;background:#3f434d;border-bottom:4px solid #3ea69a"></div>
<svg style="left:496px;top:133px;" width="14" height="30" viewBox="0 0 14 30"><path d="M0 0 L3.4 3.1 L0 6.2Z" transform="translate(7,12)" fill="#bdbdbd"/></svg>
<div style="left:512px;top:133px;width:89px;height:30px;background:#3f434d;border-bottom:4px solid #3ea69a"></div>
<span class="t" style="left:512px;top:141px;width:86px;text-align:center;font-size:10.5px;line-height:14px;color:#e6e6e6;letter-spacing:0.2px;text-shadow:0 1px 0 #1a1a1a">[015]Beat</span>
<svg style="left:512px;top:133px;" width="89" height="30" viewBox="0 0 89 30"><path d="M0 0 L3.4 3.1 L0 6.2Z" transform="translate(84,12)" fill="#bdbdbd"/></svg>
<div style="left:603px;top:133px;width:12px;height:30px;background:#3f434d;border-bottom:4px solid #3ea69a"></div>
<div style="left:617px;top:133px;width:31px;height:30px;background:#3f434d;border-bottom:4px solid #3ea69a"></div>
<span class="t" style="left:617px;top:141px;width:28px;text-align:center;font-size:10.5px;line-height:14px;color:#e6e6e6;letter-spacing:0.2px;text-shadow:0 1px 0 #1a1a1a">[0...</span>
<svg style="left:617px;top:133px;" width="31" height="30" viewBox="0 0 31 30"><path d="M0 0 L3.4 3.1 L0 6.2Z" transform="translate(26,12)" fill="#bdbdbd"/></svg>
<div style="left:650px;top:133px;width:22px;height:30px;background:#3f434d;border-bottom:4px solid #3ea69a"></div>
<span class="t" style="left:650px;top:141px;width:19px;text-align:center;font-size:10.5px;line-height:14px;color:#e6e6e6;letter-spacing:0.2px;text-shadow:0 1px 0 #1a1a1a">[...</span>
<svg style="left:650px;top:133px;" width="22" height="30" viewBox="0 0 22 30"><path d="M0 0 L3.4 3.1 L0 6.2Z" transform="translate(17,12)" fill="#bdbdbd"/></svg>
<div style="left:674px;top:133px;width:15px;height:30px;background:#3f434d;border-bottom:4px solid #3ea69a"></div>
<svg style="left:674px;top:133px;" width="15" height="30" viewBox="0 0 15 30"><path d="M0 0 L3.4 3.1 L0 6.2Z" transform="translate(8,12)" fill="#bdbdbd"/></svg>
<div style="left:691px;top:133px;width:21px;height:30px;background:#3f434d;border-bottom:4px solid #3ea69a"></div>
<span class="t" style="left:691px;top:141px;width:18px;text-align:center;font-size:10.5px;line-height:14px;color:#e6e6e6;letter-spacing:0.2px;text-shadow:0 1px 0 #1a1a1a">[...</span>
<svg style="left:691px;top:133px;" width="21" height="30" viewBox="0 0 21 30"><path d="M0 0 L3.4 3.1 L0 6.2Z" transform="translate(16,12)" fill="#bdbdbd"/></svg>
<div style="left:714px;top:133px;width:55px;height:30px;background:#3f434d;border-bottom:4px solid #3ea69a"></div>
<span class="t" style="left:714px;top:141px;width:52px;text-align:center;font-size:10.5px;line-height:14px;color:#e6e6e6;letter-spacing:0.2px;text-shadow:0 1px 0 #1a1a1a">[021]Be...</span>
<svg style="left:714px;top:133px;" width="55" height="30" viewBox="0 0 55 30"><path d="M0 0 L3.4 3.1 L0 6.2Z" transform="translate(50,12)" fill="#bdbdbd"/></svg>
<div style="left:771px;top:133px;width:30px;height:30px;background:#3f434d;border-bottom:4px solid #3ea69a"></div>
<span class="t" style="left:771px;top:141px;width:27px;text-align:center;font-size:10.5px;line-height:14px;color:#e6e6e6;letter-spacing:0.2px;text-shadow:0 1px 0 #1a1a1a">[0...</span>
<svg style="left:771px;top:133px;" width="30" height="30" viewBox="0 0 30 30"><path d="M0 0 L3.4 3.1 L0 6.2Z" transform="translate(25,12)" fill="#bdbdbd"/></svg>
<div style="left:803px;top:133px;width:4px;height:30px;background:#3f434d;border-bottom:4px solid #3ea69a"></div>
<div style="left:808px;top:133px;width:4px;height:30px;background:#3f434d;border-bottom:4px solid #3ea69a"></div>
<div style="left:813px;top:133px;width:16px;height:30px;background:#3f434d;border-bottom:4px solid #3ea69a"></div>
<svg style="left:813px;top:133px;" width="16" height="30" viewBox="0 0 16 30"><path d="M0 0 L3.4 3.1 L0 6.2Z" transform="translate(9,12)" fill="#bdbdbd"/></svg>
<div style="left:831px;top:133px;width:60px;height:30px;background:#3f434d;border-bottom:4px solid #3ea69a"></div>
<span class="t" style="left:831px;top:141px;width:57px;text-align:center;font-size:10.5px;line-height:14px;color:#e6e6e6;letter-spacing:0.2px;text-shadow:0 1px 0 #1a1a1a">[027]Beat</span>
<svg style="left:831px;top:133px;" width="60" height="30" viewBox="0 0 60 30"><path d="M0 0 L3.4 3.1 L0 6.2Z" transform="translate(55,12)" fill="#bdbdbd"/></svg>
<svg style="left:222px;top:132.5px;" width="854" height="6" viewBox="0 0 854 6"><path d="M32.7 0 H40.3 L36.5 4.5Z" fill="#f0f0f0"/><path d="M69.6 0 H77.2 L73.4 4.5Z" fill="#f0f0f0"/><path d="M96.6 0 H104.2 L100.4 4.5Z" fill="#f0f0f0"/><path d="M122.6 0 H130.2 L126.4 4.5Z" fill="#f0f0f0"/><path d="M159.7 0 H167.3 L163.5 4.5Z" fill="#f0f0f0"/><path d="M180.6 0 H188.2 L184.4 4.5Z" fill="#f0f0f0"/><path d="M196.7 0 H204.3 L200.5 4.5Z" fill="#f0f0f0"/><path d="M221.7 0 H229.3 L225.5 4.5Z" fill="#f0f0f0"/><path d="M251.7 0 H259.3 L255.5 4.5Z" fill="#f0f0f0"/><path d="M269.6 0 H277.2 L273.4 4.5Z" fill="#f0f0f0"/><path d="M285.7 0 H293.3 L289.5 4.5Z" fill="#f0f0f0"/><path d="M390.5 0 H398.1 L394.3 4.5Z" fill="#f0f0f0"/><path d="M423.6 0 H431.2 L427.4 4.5Z" fill="#f0f0f0"/><path d="M447.6 0 H455.2 L451.4 4.5Z" fill="#f0f0f0"/><path d="M464.6 0 H472.2 L468.4 4.5Z" fill="#f0f0f0"/><path d="M487.6 0 H495.2 L491.4 4.5Z" fill="#f0f0f0"/><path d="M544.7 0 H552.3 L548.5 4.5Z" fill="#f0f0f0"/><path d="M586.7 0 H594.3 L590.5 4.5Z" fill="#f0f0f0"/><path d="M604.6 0 H612.2 L608.4 4.5Z" fill="#f0f0f0"/></svg>
<div style="left:222px;top:200px;width:854px;height:29px;background:#383838;"></div>
<div style="left:222px;top:200px;width:854px;height:1px;background:#4b4b4b;"></div>
<div style="left:222px;top:225px;width:854px;height:1.2px;background:#4b4b4b;"></div>
<div style="left:222px;top:233px;width:854px;height:29px;background:#383838;"></div>
<div style="left:222px;top:233px;width:854px;height:1px;background:#4b4b4b;"></div>
<div style="left:222px;top:258px;width:854px;height:1.2px;background:#4b4b4b;"></div>
<svg style="left:222px;top:199px;" width="854" height="30" viewBox="0 0 854 30"><rect x="150.1" y="3" width="1" height="23" fill="#4f4f4f"/><rect x="239.1" y="3" width="1" height="23" fill="#4f4f4f"/><rect x="255.2" y="3" width="1" height="23" fill="#4f4f4f"/><path d="M150.6 10 L155.1 14.5 L150.6 19 L146.1 14.5Z" fill="#555555"/><path d="M239.6 10 L244.1 14.5 L239.6 19 L235.1 14.5Z" fill="#555555"/><path d="M255.7 10 L260.2 14.5 L255.7 19 L251.2 14.5Z" fill="#555555"/></svg>
<svg style="left:222px;top:232px;" width="854" height="30" viewBox="0 0 854 30"><rect x="9.1" y="3" width="1" height="23" fill="#4f4f4f"/><rect x="19.9" y="3" width="1" height="23" fill="#4f4f4f"/><rect x="25.9" y="3" width="1" height="23" fill="#4f4f4f"/><rect x="28.8" y="3" width="1" height="23" fill="#4f4f4f"/><rect x="36.0" y="3" width="1" height="23" fill="#4f4f4f"/><rect x="54.5" y="3" width="1" height="23" fill="#4f4f4f"/><rect x="72.9" y="3" width="1" height="23" fill="#4f4f4f"/><rect x="100.0" y="3" width="1" height="23" fill="#4f4f4f"/><rect x="108.9" y="3" width="1" height="23" fill="#4f4f4f"/><rect x="112.7" y="3" width="1" height="23" fill="#4f4f4f"/><rect x="117.2" y="3" width="1" height="23" fill="#4f4f4f"/><rect x="121.7" y="3" width="1" height="23" fill="#4f4f4f"/><rect x="125.5" y="3" width="1" height="23" fill="#4f4f4f"/><rect x="132.8" y="3" width="1" height="23" fill="#4f4f4f"/><rect x="150.3" y="3" width="1" height="23" fill="#4f4f4f"/><rect x="153.0" y="3" width="1" height="23" fill="#4f4f4f"/><rect x="157.5" y="3" width="1" height="23" fill="#4f4f4f"/><rect x="162.4" y="3" width="1" height="23" fill="#4f4f4f"/><rect x="183.9" y="3" width="1" height="23" fill="#4f4f4f"/><rect x="199.5" y="3" width="1" height="23" fill="#4f4f4f"/><rect x="215.6" y="3" width="1" height="23" fill="#4f4f4f"/><rect x="219.0" y="3" width="1" height="23" fill="#4f4f4f"/><rect x="224.6" y="3" width="1" height="23" fill="#4f4f4f"/><rect x="236.4" y="3" width="1" height="23" fill="#4f4f4f"/><rect x="239.1" y="3" width="1" height="23" fill="#4f4f4f"/><rect x="249.8" y="3" width="1" height="23" fill="#4f4f4f"/><rect x="254.8" y="3" width="1" height="23" fill="#4f4f4f"/><rect x="258.8" y="3" width="1" height="23" fill="#4f4f4f"/><rect x="278.3" y="3" width="1" height="23" fill="#4f4f4f"/><rect x="282.7" y="3" width="1" height="23" fill="#4f4f4f"/><rect x="285.0" y="3" width="1" height="23" fill="#4f4f4f"/><rect x="287.7" y="3" width="1" height="23" fill="#4f4f4f"/><rect x="380.0" y="3" width="1" height="23" fill="#4f4f4f"/><rect x="393.2" y="3" width="1" height="23" fill="#4f4f4f"/><rect x="407.9" y="3" width="1" height="23" fill="#4f4f4f"/><rect x="412.6" y="3" width="1" height="23" fill="#4f4f4f"/><rect x="426.0" y="3" width="1" height="23" fill="#4f4f4f"/><rect x="450.7" y="3" width="1" height="23" fill="#4f4f4f"/><rect x="467.4" y="3" width="1" height="23" fill="#4f4f4f"/><rect x="490.0" y="3" width="1" height="23" fill="#4f4f4f"/><rect x="505.9" y="3" width="1" height="23" fill="#4f4f4f"/><rect x="547.5" y="3" width="1" height="23" fill="#4f4f4f"/><rect x="561.2" y="3" width="1" height="23" fill="#4f4f4f"/><rect x="564.5" y="3" width="1" height="23" fill="#4f4f4f"/><rect x="568.5" y="3" width="1" height="23" fill="#4f4f4f"/><rect x="580.0" y="3" width="1" height="23" fill="#4f4f4f"/><rect x="584.7" y="3" width="1" height="23" fill="#4f4f4f"/><rect x="589.8" y="3" width="1" height="23" fill="#4f4f4f"/><path d="M9.6 10 L14.1 14.5 L9.6 19 L5.1 14.5Z" fill="#555555"/><path d="M20.4 10 L24.9 14.5 L20.4 19 L15.9 14.5Z" fill="#555555"/><path d="M26.4 10 L30.9 14.5 L26.4 19 L21.9 14.5Z" fill="#555555"/><path d="M29.3 10 L33.8 14.5 L29.3 19 L24.8 14.5Z" fill="#555555"/><path d="M36.5 10 L41.0 14.5 L36.5 19 L32.0 14.5Z" fill="#555555"/><path d="M55.0 10 L59.5 14.5 L55.0 19 L50.5 14.5Z" fill="#555555"/><path d="M73.4 10 L77.9 14.5 L73.4 19 L68.9 14.5Z" fill="#555555"/><path d="M100.5 10 L105.0 14.5 L100.5 19 L96.0 14.5Z" fill="#555555"/><path d="M109.4 10 L113.9 14.5 L109.4 19 L104.9 14.5Z" fill="#555555"/><path d="M113.2 10 L117.7 14.5 L113.2 19 L108.7 14.5Z" fill="#555555"/><path d="M117.7 10 L122.2 14.5 L117.7 19 L113.2 14.5Z" fill="#555555"/><path d="M122.2 10 L126.7 14.5 L122.2 19 L117.7 14.5Z" fill="#555555"/><path d="M126.0 10 L130.5 14.5 L126.0 19 L121.5 14.5Z" fill="#555555"/><path d="M133.3 10 L137.8 14.5 L133.3 19 L128.8 14.5Z" fill="#555555"/><path d="M150.8 10 L155.3 14.5 L150.8 19 L146.3 14.5Z" fill="#555555"/><path d="M153.5 10 L158.0 14.5 L153.5 19 L149.0 14.5Z" fill="#555555"/><path d="M158.0 10 L162.5 14.5 L158.0 19 L153.5 14.5Z" fill="#555555"/><path d="M162.9 10 L167.4 14.5 L162.9 19 L158.4 14.5Z" fill="#555555"/><path d="M184.4 10 L188.9 14.5 L184.4 19 L179.9 14.5Z" fill="#555555"/><path d="M200.0 10 L204.5 14.5 L200.0 19 L195.5 14.5Z" fill="#555555"/><path d="M216.1 10 L220.6 14.5 L216.1 19 L211.6 14.5Z" fill="#555555"/><path d="M219.5 10 L224.0 14.5 L219.5 19 L215.0 14.5Z" fill="#555555"/><path d="M225.1 10 L229.6 14.5 L225.1 19 L220.6 14.5Z" fill="#555555"/><path d="M236.9 10 L241.4 14.5 L236.9 19 L232.4 14.5Z" fill="#555555"/><path d="M239.6 10 L244.1 14.5 L239.6 19 L235.1 14.5Z" fill="#555555"/><path d="M250.3 10 L254.8 14.5 L250.3 19 L245.8 14.5Z" fill="#555555"/><path d="M255.3 10 L259.8 14.5 L255.3 19 L250.8 14.5Z" fill="#555555"/><path d="M259.3 10 L263.8 14.5 L259.3 19 L254.8 14.5Z" fill="#555555"/><path d="M278.8 10 L283.3 14.5 L278.8 19 L274.3 14.5Z" fill="#555555"/><path d="M283.2 10 L287.7 14.5 L283.2 19 L278.7 14.5Z" fill="#555555"/><path d="M285.5 10 L290.0 14.5 L285.5 19 L281.0 14.5Z" fill="#555555"/><path d="M288.2 10 L292.7 14.5 L288.2 19 L283.7 14.5Z" fill="#555555"/><path d="M380.5 10 L385.0 14.5 L380.5 19 L376.0 14.5Z" fill="#555555"/><path d="M393.7 10 L398.2 14.5 L393.7 19 L389.2 14.5Z" fill="#555555"/><path d="M408.4 10 L412.9 14.5 L408.4 19 L403.9 14.5Z" fill="#555555"/><path d="M413.1 10 L417.6 14.5 L413.1 19 L408.6 14.5Z" fill="#555555"/><path d="M426.5 10 L431.0 14.5 L426.5 19 L422.0 14.5Z" fill="#555555"/><path d="M451.2 10 L455.7 14.5 L451.2 19 L446.7 14.5Z" fill="#555555"/><path d="M467.9 10 L472.4 14.5 L467.9 19 L463.4 14.5Z" fill="#555555"/><path d="M490.5 10 L495.0 14.5 L490.5 19 L486.0 14.5Z" fill="#555555"/><path d="M506.4 10 L510.9 14.5 L506.4 19 L501.9 14.5Z" fill="#555555"/><path d="M548.0 10 L552.5 14.5 L548.0 19 L543.5 14.5Z" fill="#555555"/><path d="M561.7 10 L566.2 14.5 L561.7 19 L557.2 14.5Z" fill="#555555"/><path d="M565.0 10 L569.5 14.5 L565.0 19 L560.5 14.5Z" fill="#555555"/><path d="M569.0 10 L573.5 14.5 L569.0 19 L564.5 14.5Z" fill="#555555"/><path d="M580.5 10 L585.0 14.5 L580.5 19 L576.0 14.5Z" fill="#555555"/><path d="M585.2 10 L589.7 14.5 L585.2 19 L580.7 14.5Z" fill="#555555"/><path d="M590.3 10 L594.8 14.5 L590.3 19 L585.8 14.5Z" fill="#555555"/></svg>
<div style="left:231px;top:200px;width:1px;height:29px;background:rgba(255,255,255,0.04);"></div>
<div style="left:231px;top:233px;width:1px;height:29px;background:rgba(255,255,255,0.04);"></div>
<div style="left:284px;top:200px;width:1px;height:29px;background:rgba(255,255,255,0.04);"></div>
<div style="left:284px;top:233px;width:1px;height:29px;background:rgba(255,255,255,0.04);"></div>
<div style="left:336px;top:200px;width:1px;height:29px;background:rgba(255,255,255,0.04);"></div>
<div style="left:336px;top:233px;width:1px;height:29px;background:rgba(255,255,255,0.04);"></div>
<div style="left:389px;top:200px;width:1px;height:29px;background:rgba(255,255,255,0.04);"></div>
<div style="left:389px;top:233px;width:1px;height:29px;background:rgba(255,255,255,0.04);"></div>
<div style="left:441px;top:200px;width:1px;height:29px;background:rgba(255,255,255,0.04);"></div>
<div style="left:441px;top:233px;width:1px;height:29px;background:rgba(255,255,255,0.04);"></div>
<div style="left:494px;top:200px;width:1px;height:29px;background:rgba(255,255,255,0.04);"></div>
<div style="left:494px;top:233px;width:1px;height:29px;background:rgba(255,255,255,0.04);"></div>
<div style="left:546px;top:200px;width:1px;height:29px;background:rgba(255,255,255,0.04);"></div>
<div style="left:546px;top:233px;width:1px;height:29px;background:rgba(255,255,255,0.04);"></div>
<div style="left:599px;top:200px;width:1px;height:29px;background:rgba(255,255,255,0.04);"></div>
<div style="left:599px;top:233px;width:1px;height:29px;background:rgba(255,255,255,0.04);"></div>
<div style="left:651px;top:200px;width:1px;height:29px;background:rgba(255,255,255,0.04);"></div>
<div style="left:651px;top:233px;width:1px;height:29px;background:rgba(255,255,255,0.04);"></div>
<div style="left:704px;top:200px;width:1px;height:29px;background:rgba(255,255,255,0.04);"></div>
<div style="left:704px;top:233px;width:1px;height:29px;background:rgba(255,255,255,0.04);"></div>
<div style="left:756px;top:200px;width:1px;height:29px;background:rgba(255,255,255,0.04);"></div>
<div style="left:756px;top:233px;width:1px;height:29px;background:rgba(255,255,255,0.04);"></div>
<div style="left:809px;top:200px;width:1px;height:29px;background:rgba(255,255,255,0.04);"></div>
<div style="left:809px;top:233px;width:1px;height:29px;background:rgba(255,255,255,0.04);"></div>
<div style="left:861px;top:200px;width:1px;height:29px;background:rgba(255,255,255,0.04);"></div>
<div style="left:861px;top:233px;width:1px;height:29px;background:rgba(255,255,255,0.04);"></div>
<div style="left:914px;top:200px;width:1px;height:29px;background:rgba(255,255,255,0.04);"></div>
<div style="left:914px;top:233px;width:1px;height:29px;background:rgba(255,255,255,0.04);"></div>
<div style="left:966px;top:200px;width:1px;height:29px;background:rgba(255,255,255,0.04);"></div>
<div style="left:966px;top:233px;width:1px;height:29px;background:rgba(255,255,255,0.04);"></div>
<div style="left:1019px;top:200px;width:1px;height:29px;background:rgba(255,255,255,0.04);"></div>
<div style="left:1019px;top:233px;width:1px;height:29px;background:rgba(255,255,255,0.04);"></div>
<div style="left:373px;top:265px;width:103px;height:30px;background:#3f434d;border-bottom:4px solid #0da32b"></div>
<span class="t" style="left:373px;top:273px;width:103px;text-align:center;font-size:10.5px;line-height:14px;color:#e6e6e6;letter-spacing:0.3px;text-shadow:0 1px 0 #1a1a1a">Active</span>
<div style="left:222px;top:298px;width:850.5px;height:261px;background:#262e33;"></div>
<div style="left:14px;top:298px;width:206px;height:30px;background:#263238;border-radius:4px 0 0 4px"></div>
<div style="left:160px;top:302px;width:41px;height:22px;background:#262b2d;border-radius:3px"></div>
<svg style="left:164px;top:307px;" width="12" height="12" viewBox="0 0 12 12"><path d="M3.5 6 V3.8 A2.3 2.3 0 0 1 8 3.2" fill="none" stroke="#5c6366" stroke-width="1.1"/><rect x="2.6" y="6" width="7" height="5" fill="none" stroke="#5c6366" stroke-width="1.1"/></svg>
<svg style="left:181px;top:307px;" width="15" height="12" viewBox="0 0 15 12"><path d="M0.8 6 C3 2.6 5.5 2 7.5 2 C9.5 2 12 2.6 14.2 6 C12 9.4 9.5 10 7.5 10 C5.5 10 3 9.4 0.8 6Z" fill="none" stroke="#5c6366" stroke-width="1.1"/><circle cx="7.5" cy="5.6" r="2.6" fill="#5c6366"/></svg>
<svg style="left:204px;top:307px;" width="12" height="12" viewBox="0 0 12 12"><path d="M0 6 H12 M6 0 V12" stroke="#e0e0e0" stroke-width="1.7"/></svg>
<span class="t" style="left:34.2px;top:306px;font-size:12.5px;line-height:16px;color:#d2d2d2;letter-spacing:-0.05px;">daoju</span>
<svg style="left:3px;top:306px;" width="9" height="10" viewBox="0 0 9 10"><path d="M0.5 0.5 L8 5 L0.5 9.5Z" fill="#6c6c6c"/></svg>
<div style="left:222px;top:328px;width:850.5px;height:3px;background:#2a2c2d;"></div>
<div style="left:14px;top:331px;width:206px;height:30px;background:#263238;border-radius:4px 0 0 4px"></div>
<div style="left:160px;top:335px;width:41px;height:22px;background:#262b2d;border-radius:3px"></div>
<svg style="left:164px;top:340px;" width="12" height="12" viewBox="0 0 12 12"><path d="M3.5 6 V3.8 A2.3 2.3 0 0 1 8 3.2" fill="none" stroke="#5c6366" stroke-width="1.1"/><rect x="2.6" y="6" width="7" height="5" fill="none" stroke="#5c6366" stroke-width="1.1"/></svg>
<svg style="left:181px;top:340px;" width="15" height="12" viewBox="0 0 15 12"><path d="M0.8 6 C3 2.6 5.5 2 7.5 2 C9.5 2 12 2.6 14.2 6 C12 9.4 9.5 10 7.5 10 C5.5 10 3 9.4 0.8 6Z" fill="none" stroke="#5c6366" stroke-width="1.1"/><circle cx="7.5" cy="5.6" r="2.6" fill="#5c6366"/></svg>
<svg style="left:204px;top:340px;" width="12" height="12" viewBox="0 0 12 12"><path d="M0 6 H12 M6 0 V12" stroke="#e0e0e0" stroke-width="1.7"/></svg>
<span class="t" style="left:34.2px;top:339px;font-size:12.5px;line-height:16px;color:#d2d2d2;letter-spacing:-0.18px;">Camera Group</span>
<div style="left:222px;top:361px;width:850.5px;height:3px;background:#2a2c2d;"></div>
<div style="left:14px;top:364px;width:206px;height:30px;background:#263238;border-radius:4px 0 0 4px"></div>
<div style="left:160px;top:368px;width:41px;height:22px;background:#262b2d;border-radius:3px"></div>
<svg style="left:164px;top:373px;" width="12" height="12" viewBox="0 0 12 12"><path d="M3.5 6 V3.8 A2.3 2.3 0 0 1 8 3.2" fill="none" stroke="#5c6366" stroke-width="1.1"/><rect x="2.6" y="6" width="7" height="5" fill="none" stroke="#5c6366" stroke-width="1.1"/></svg>
<svg style="left:181px;top:373px;" width="15" height="12" viewBox="0 0 15 12"><path d="M0.8 6 C3 2.6 5.5 2 7.5 2 C9.5 2 12 2.6 14.2 6 C12 9.4 9.5 10 7.5 10 C5.5 10 3 9.4 0.8 6Z" fill="none" stroke="#5c6366" stroke-width="1.1"/><circle cx="7.5" cy="5.6" r="2.6" fill="#5c6366"/></svg>
<svg style="left:204px;top:373px;" width="12" height="12" viewBox="0 0 12 12"><path d="M0 6 H12 M6 0 V12" stroke="#e0e0e0" stroke-width="1.7"/></svg>
<span class="t" style="left:34.2px;top:372px;font-size:12.5px;line-height:16px;color:#d2d2d2;letter-spacing:-0.25px;">Role Group</span>
<svg style="left:3px;top:372px;" width="9" height="10" viewBox="0 0 9 10"><path d="M0.5 0.5 L8 5 L0.5 9.5Z" fill="#6c6c6c"/></svg>
<div style="left:222px;top:394px;width:850.5px;height:3px;background:#2a2c2d;"></div>
<div style="left:14px;top:397px;width:206px;height:30px;background:#263238;border-radius:4px 0 0 4px"></div>
<div style="left:160px;top:401px;width:41px;height:22px;background:#262b2d;border-radius:3px"></div>
<svg style="left:164px;top:406px;" width="12" height="12" viewBox="0 0 12 12"><path d="M3.5 6 V3.8 A2.3 2.3 0 0 1 8 3.2" fill="none" stroke="#5c6366" stroke-width="1.1"/><rect x="2.6" y="6" width="7" height="5" fill="none" stroke="#5c6366" stroke-width="1.1"/></svg>
<svg style="left:181px;top:406px;" width="15" height="12" viewBox="0 0 15 12"><path d="M0.8 6 C3 2.6 5.5 2 7.5 2 C9.5 2 12 2.6 14.2 6 C12 9.4 9.5 10 7.5 10 C5.5 10 3 9.4 0.8 6Z" fill="none" stroke="#5c6366" stroke-width="1.1"/><circle cx="7.5" cy="5.6" r="2.6" fill="#5c6366"/></svg>
<svg style="left:204px;top:406px;" width="12" height="12" viewBox="0 0 12 12"><path d="M0 6 H12 M6 0 V12" stroke="#e0e0e0" stroke-width="1.7"/></svg>
<span class="t" style="left:34.2px;top:405px;font-size:12.5px;line-height:16px;color:#d2d2d2;letter-spacing:-0.27px;">UI Group</span>
<svg style="left:3px;top:405px;" width="9" height="10" viewBox="0 0 9 10"><path d="M0.5 0.5 L8 5 L0.5 9.5Z" fill="#6c6c6c"/></svg>
<div style="left:222px;top:427px;width:850.5px;height:3px;background:#2a2c2d;"></div>
<div style="left:14px;top:430px;width:206px;height:30px;background:#263238;border-radius:4px 0 0 4px"></div>
<div style="left:160px;top:434px;width:41px;height:22px;background:#262b2d;border-radius:3px"></div>
<svg style="left:164px;top:439px;" width="12" height="12" viewBox="0 0 12 12"><path d="M3.5 6 V3.8 A2.3 2.3 0 0 1 8 3.2" fill="none" stroke="#5c6366" stroke-width="1.1"/><rect x="2.6" y="6" width="7" height="5" fill="none" stroke="#5c6366" stroke-width="1.1"/></svg>
<svg style="left:181px;top:439px;" width="15" height="12" viewBox="0 0 15 12"><path d="M0.8 6 C3 2.6 5.5 2 7.5 2 C9.5 2 12 2.6 14.2 6 C12 9.4 9.5 10 7.5 10 C5.5 10 3 9.4 0.8 6Z" fill="none" stroke="#5c6366" stroke-width="1.1"/><circle cx="7.5" cy="5.6" r="2.6" fill="#5c6366"/></svg>
<svg style="left:204px;top:439px;" width="12" height="12" viewBox="0 0 12 12"><path d="M0 6 H12 M6 0 V12" stroke="#e0e0e0" stroke-width="1.7"/></svg>
<span class="t" style="left:34.2px;top:438px;font-size:12.5px;line-height:16px;color:#d2d2d2;letter-spacing:-0.04px;">Postprocess Group</span>
<div style="left:222px;top:460px;width:850.5px;height:3px;background:#2a2c2d;"></div>
<div style="left:14px;top:463px;width:206px;height:30px;background:#263238;border-radius:4px 0 0 4px"></div>
<div style="left:160px;top:467px;width:41px;height:22px;background:#262b2d;border-radius:3px"></div>
<svg style="left:164px;top:472px;" width="12" height="12" viewBox="0 0 12 12"><path d="M3.5 6 V3.8 A2.3 2.3 0 0 1 8 3.2" fill="none" stroke="#5c6366" stroke-width="1.1"/><rect x="2.6" y="6" width="7" height="5" fill="none" stroke="#5c6366" stroke-width="1.1"/></svg>
<svg style="left:181px;top:472px;" width="15" height="12" viewBox="0 0 15 12"><path d="M0.8 6 C3 2.6 5.5 2 7.5 2 C9.5 2 12 2.6 14.2 6 C12 9.4 9.5 10 7.5 10 C5.5 10 3 9.4 0.8 6Z" fill="none" stroke="#5c6366" stroke-width="1.1"/><circle cx="7.5" cy="5.6" r="2.6" fill="#5c6366"/></svg>
<svg style="left:204px;top:472px;" width="12" height="12" viewBox="0 0 12 12"><path d="M0 6 H12 M6 0 V12" stroke="#e0e0e0" stroke-width="1.7"/></svg>
<span class="t" style="left:34.2px;top:471px;font-size:12.5px;line-height:16px;color:#d2d2d2;letter-spacing:0.04px;">Music Group</span>
<svg style="left:3px;top:471px;" width="9" height="10" viewBox="0 0 9 10"><path d="M0.5 0.5 L8 5 L0.5 9.5Z" fill="#6c6c6c"/></svg>
<div style="left:222px;top:493px;width:850.5px;height:3px;background:#2a2c2d;"></div>
<div style="left:14px;top:496px;width:206px;height:30px;background:#263238;border-radius:4px 0 0 4px"></div>
<div style="left:160px;top:500px;width:41px;height:22px;background:#262b2d;border-radius:3px"></div>
<svg style="left:164px;top:505px;" width="12" height="12" viewBox="0 0 12 12"><path d="M3.5 6 V3.8 A2.3 2.3 0 0 1 8 3.2" fill="none" stroke="#5c6366" stroke-width="1.1"/><rect x="2.6" y="6" width="7" height="5" fill="none" stroke="#5c6366" stroke-width="1.1"/></svg>
<svg style="left:181px;top:505px;" width="15" height="12" viewBox="0 0 15 12"><path d="M0.8 6 C3 2.6 5.5 2 7.5 2 C9.5 2 12 2.6 14.2 6 C12 9.4 9.5 10 7.5 10 C5.5 10 3 9.4 0.8 6Z" fill="none" stroke="#5c6366" stroke-width="1.1"/><circle cx="7.5" cy="5.6" r="2.6" fill="#5c6366"/></svg>
<svg style="left:204px;top:505px;" width="12" height="12" viewBox="0 0 12 12"><path d="M0 6 H12 M6 0 V12" stroke="#e0e0e0" stroke-width="1.7"/></svg>
<span class="t" style="left:34.2px;top:504px;font-size:12.5px;line-height:16px;color:#d2d2d2;letter-spacing:-0.12px;">Other Group</span>
<svg style="left:3px;top:504px;" width="9" height="10" viewBox="0 0 9 10"><path d="M0.5 0.5 L8 5 L0.5 9.5Z" fill="#6c6c6c"/></svg>
<div style="left:222px;top:526px;width:850.5px;height:3px;background:#2a2c2d;"></div>
<div style="left:14px;top:529px;width:206px;height:30px;background:#263238;border-radius:4px 0 0 4px"></div>
<div style="left:160px;top:533px;width:41px;height:22px;background:#262b2d;border-radius:3px"></div>
<svg style="left:164px;top:538px;" width="12" height="12" viewBox="0 0 12 12"><path d="M3.5 6 V3.8 A2.3 2.3 0 0 1 8 3.2" fill="none" stroke="#5c6366" stroke-width="1.1"/><rect x="2.6" y="6" width="7" height="5" fill="none" stroke="#5c6366" stroke-width="1.1"/></svg>
<svg style="left:181px;top:538px;" width="15" height="12" viewBox="0 0 15 12"><path d="M0.8 6 C3 2.6 5.5 2 7.5 2 C9.5 2 12 2.6 14.2 6 C12 9.4 9.5 10 7.5 10 C5.5 10 3 9.4 0.8 6Z" fill="none" stroke="#5c6366" stroke-width="1.1"/><circle cx="7.5" cy="5.6" r="2.6" fill="#5c6366"/></svg>
<svg style="left:204px;top:538px;" width="12" height="12" viewBox="0 0 12 12"><path d="M0 6 H12 M6 0 V12" stroke="#e0e0e0" stroke-width="1.7"/></svg>
<span class="t" style="left:34.2px;top:537px;font-size:12.5px;line-height:16px;color:#d2d2d2;letter-spacing:0.07px;">EffectGroup</span>
<svg style="left:3px;top:537px;" width="9" height="10" viewBox="0 0 9 10"><path d="M0.5 0.5 L8 5 L0.5 9.5Z" fill="#6c6c6c"/></svg>
<div style="left:232px;top:302px;width:320px;height:22px;background:#38454e;"></div>
<div style="left:464px;top:302px;width:88px;height:22px;background:#3a4650;"></div>
<div style="left:254px;top:401px;width:7px;height:22px;background:#343f48;"></div>
<div style="left:265px;top:401px;width:97px;height:22px;background:#343f48;"></div>
<div style="left:412px;top:401px;width:49px;height:22px;background:#343f48;"></div>
<div style="left:511px;top:401px;width:47px;height:22px;background:#343f48;"></div>
<div style="left:580px;top:401px;width:22px;height:22px;background:#343f48;"></div>
<div style="left:644px;top:401px;width:44.60000000000002px;height:22px;background:#343f48;"></div>
<div style="left:690px;top:401px;width:62.39999999999998px;height:22px;background:#343f48;"></div>
<div style="left:754px;top:401px;width:29px;height:22px;background:#343f48;"></div>
<div style="left:885px;top:401px;width:6px;height:22px;background:#343f48;"></div>
<div style="left:716px;top:401px;width:1px;height:22px;background:#38454e;"></div>
<div style="left:232px;top:467px;width:638px;height:22px;background:#3a4650;"></div>
<div style="left:803px;top:467px;width:67px;height:22px;background:#3b4852;"></div>
<div style="left:232px;top:500px;width:640px;height:22px;background:#333f48;"></div>
<div style="left:232px;top:533px;width:152px;height:22px;background:#333f48;"></div>
<div style="left:330px;top:533px;width:54px;height:22px;background:#394650;"></div>
<div style="left:368px;top:533px;width:4px;height:22px;background:#36424b;"></div>
<div style="left:372px;top:533px;width:12px;height:22px;background:#3c4954;"></div>
<div style="left:455px;top:533px;width:20px;height:22px;background:#333f48;"></div>
<div style="left:455px;top:533px;width:9px;height:22px;background:#3c4954;"></div>
<div style="left:477px;top:533px;width:415px;height:22px;background:#333f48;"></div>
<div style="left:477px;top:533px;width:34px;height:22px;background:#394650;"></div>
<div style="left:497px;top:533px;width:7px;height:22px;background:#3c4954;"></div>
<div style="left:527px;top:533px;width:87px;height:22px;background:#384550;"></div>
<div style="left:681px;top:533px;width:19.600000000000023px;height:22px;background:#3a4752;"></div>
<div style="left:770px;top:533px;width:14.600000000000023px;height:22px;background:#3a4752;"></div>
<div style="left:793px;top:533px;width:14.700000000000045px;height:22px;background:#3a4752;"></div>
<div style="left:819px;top:533px;width:73px;height:22px;background:#394651;"></div>
<div style="left:231px;top:298px;width:1px;height:261px;background:rgba(255,255,255,0.17);"></div>
<div style="left:231px;top:559px;width:1px;height:42px;background:rgba(255,255,255,0.07);"></div>
<div style="left:284px;top:298px;width:1px;height:261px;background:rgba(255,255,255,0.085);"></div>
<div style="left:284px;top:559px;width:1px;height:42px;background:rgba(255,255,255,0.07);"></div>
<div style="left:336px;top:298px;width:1px;height:261px;background:rgba(255,255,255,0.085);"></div>
<div style="left:336px;top:559px;width:1px;height:42px;background:rgba(255,255,255,0.07);"></div>
<div style="left:389px;top:298px;width:1px;height:261px;background:rgba(255,255,255,0.085);"></div>
<div style="left:389px;top:559px;width:1px;height:42px;background:rgba(255,255,255,0.07);"></div>
<div style="left:441px;top:298px;width:1px;height:261px;background:rgba(255,255,255,0.085);"></div>
<div style="left:441px;top:559px;width:1px;height:42px;background:rgba(255,255,255,0.07);"></div>
<div style="left:494px;top:298px;width:1px;height:261px;background:rgba(255,255,255,0.085);"></div>
<div style="left:494px;top:559px;width:1px;height:42px;background:rgba(255,255,255,0.07);"></div>
<div style="left:546px;top:298px;width:1px;height:261px;background:rgba(255,255,255,0.085);"></div>
<div style="left:546px;top:559px;width:1px;height:42px;background:rgba(255,255,255,0.07);"></div>
<div style="left:599px;top:298px;width:1px;height:261px;background:rgba(255,255,255,0.085);"></div>
<div style="left:599px;top:559px;width:1px;height:42px;background:rgba(255,255,255,0.07);"></div>
<div style="left:651px;top:298px;width:1px;height:261px;background:rgba(255,255,255,0.085);"></div>
<div style="left:651px;top:559px;width:1px;height:42px;background:rgba(255,255,255,0.07);"></div>
<div style="left:704px;top:298px;width:1px;height:261px;background:rgba(255,255,255,0.085);"></div>
<div style="left:704px;top:559px;width:1px;height:42px;background:rgba(255,255,255,0.07);"></div>
<div style="left:756px;top:298px;width:1px;height:261px;background:rgba(255,255,255,0.085);"></div>
<div style="left:756px;top:559px;width:1px;height:42px;background:rgba(255,255,255,0.07);"></div>
<div style="left:809px;top:298px;width:1px;height:261px;background:rgba(255,255,255,0.085);"></div>
<div style="left:809px;top:559px;width:1px;height:42px;background:rgba(255,255,255,0.07);"></div>
<div style="left:861px;top:298px;width:1px;height:261px;background:rgba(255,255,255,0.085);"></div>
<div style="left:861px;top:559px;width:1px;height:42px;background:rgba(255,255,255,0.07);"></div>
<div style="left:914px;top:298px;width:1px;height:261px;background:rgba(255,255,255,0.085);"></div>
<div style="left:914px;top:559px;width:1px;height:42px;background:rgba(255,255,255,0.07);"></div>
<div style="left:966px;top:298px;width:1px;height:261px;background:rgba(255,255,255,0.085);"></div>
<div style="left:966px;top:559px;width:1px;height:42px;background:rgba(255,255,255,0.07);"></div>
<div style="left:1019px;top:298px;width:1px;height:261px;background:rgba(255,255,255,0.085);"></div>
<div style="left:1019px;top:559px;width:1px;height:42px;background:rgba(255,255,255,0.07);"></div>
<div style="left:1071px;top:298px;width:1px;height:261px;background:rgba(255,255,255,0.085);"></div>
<div style="left:1071px;top:559px;width:1px;height:42px;background:rgba(255,255,255,0.07);"></div>
<div style="left:892px;top:119px;width:1px;height:482px;background:#3a5795;"></div>
<div style="left:890px;top:105px;width:5px;height:14px;background:#2c5ab8;"></div>
<div style="left:873.1px;top:118px;width:1.35px;height:483px;background:#ffffff;"></div>
<svg style="left:868px;top:104px;" width="11" height="19" viewBox="0 0 11 19"><path d="M0 0 H11 V13.6 L5.8 18.8 L0 13.6Z" fill="#ffffff"/></svg>
<div style="left:0px;top:601px;width:1076px;height:13px;background:#383838;"></div>
<svg style="left:228.5px;top:603.5px;" width="5" height="9" viewBox="0 0 5 9"><path d="M4.8 0.3 V8.7 L0.3 4.5Z" fill="#cccccc"/></svg>
<svg style="left:1066.5px;top:603.5px;" width="5" height="9" viewBox="0 0 5 9"><path d="M0.2 0.3 V8.7 L4.7 4.5Z" fill="#cccccc"/></svg>
<div style="left:239px;top:603px;width:822px;height:10px;background:#6b6b6b;border-radius:5px"></div>
<div style="left:239px;top:603px;width:12.5px;height:10px;background:#858585;border-radius:5px 0 0 5px"></div>
<div style="left:251px;top:603px;width:1px;height:10px;background:#8f8f8f;"></div>
<div style="left:1048px;top:603px;width:13px;height:10px;background:#858585;border-radius:0 5px 5px 0"></div>
<div style="left:1047.5px;top:603px;width:1px;height:10px;background:#8f8f8f;"></div>
<div style="left:1027px;top:601px;width:1.3px;height:13px;background:#e4e4e4;"></div>
<div style="left:219.3px;top:104px;width:2px;height:510px;background:#4d4d4d;"></div>
<div style="left:0px;top:614px;width:1076px;height:4px;background:#1c1c1c;"></div>
<div style="left:0px;top:618px;width:1076px;height:17px;background:#282828;"></div>
<div style="left:0px;top:635px;width:1076px;height:259px;background:#383838;"></div>
<div style="left:196px;top:616px;width:100px;height:19px;background:#383838;border-radius:2px 2px 0 0;border-top:2px solid #2c5d8a"></div>
<svg style="left:7px;top:620px;" width="12" height="12" viewBox="0 0 12 12"><rect x="0.5" y="0.5" width="11" height="11" rx="1.5" fill="#c4c4c4"/><path d="M2.5 3 H4 M5 3 H9.5 M2.5 6 H4 M5 6 H9.5 M2.5 9 H4 M5 9 H9.5" stroke="#282828" stroke-width="1.2"/></svg>
<span class="t" style="left:23.5px;top:619px;font-size:12.5px;line-height:16px;color:#c4c4c4;letter-spacing:-0.06px;">Console</span>
<span class="t" style="left:94px;top:619px;font-size:12.5px;line-height:16px;color:#c4c4c4;letter-spacing:0.04px;">CutsceneEditor</span>
<span class="t" style="left:202px;top:619px;font-size:12.5px;line-height:16px;color:#c4c4c4;letter-spacing:0.04px;">PAction编辑器</span>
<svg style="left:1061.5px;top:620.5px;" width="3" height="11" viewBox="0 0 3 11"><rect x="0" y="0.1" width="2.1" height="2.1" rx="0.3" fill="#c4c4c4"/><rect x="0" y="4" width="2.1" height="2.1" rx="0.3" fill="#c4c4c4"/><rect x="0" y="7.9" width="2.1" height="2.1" rx="0.3" fill="#c4c4c4"/></svg>
<span class="t" style="left:8px;top:643px;font-size:12.5px;line-height:16px;color:#c4c4c4;letter-spacing:0.01px;">LuaConfigName:</span>
<div style="left:129px;top:641px;width:66px;height:25px;background:#2a2a2a;border-radius:3px;border:1px solid #1f1f1f"></div>
<span class="t" style="left:132.5px;top:646px;font-size:12.5px;line-height:16px;color:#d2d2d2;letter-spacing:-0.13px;">PAct_New</span>
<div style="left:202px;top:642px;width:61.3px;height:23px;background:#585858;border-radius:3px;box-shadow:0 0 0 0.6px #2c2c2c;"></div><span class="t" style="left:208.6px;top:645.5px;font-size:12.5px;line-height:16px;color:#e0e0e0;letter-spacing:-0.06px;">ClearBtn</span>
<span class="t" style="left:271px;top:643px;font-size:12.5px;line-height:16px;color:#c4c4c4;letter-spacing:-0.29px;">Remark:</span>
<div style="left:392px;top:641px;width:9px;height:25px;background:#2a2a2a;border-radius:3px;border:1px solid #1f1f1f"></div>
<span class="t" style="left:408.5px;top:643px;font-size:12.5px;line-height:16px;color:#c4c4c4;letter-spacing:0.02px;">EndType:</span>
<div style="left:530px;top:642px;width:63.3px;height:23px;background:#515151;border-radius:3px;box-shadow:0 0 0 0.6px #2c2c2c"></div>
<span class="t" style="left:533.5px;top:646px;font-size:12.5px;line-height:16px;color:#e0e0e0;letter-spacing:-0.01px;">Destroy</span>
<svg style="left:581px;top:651px;" width="8" height="5" viewBox="0 0 8 5"><path d="M0.3 0.3 H7.7 L4 4.7Z" fill="#c4c4c4"/></svg>
<div style="left:743px;top:642px;width:105px;height:23.2px;background:#585858;border-radius:3px;box-shadow:0 0 0 0.6px #2c2c2c;"></div><span class="t" style="left:749.5px;top:645.6px;font-size:12.5px;line-height:16px;color:#e0e0e0;letter-spacing:-0.48px;">Lua配置文件选择</span>
<span class="t" style="left:856px;top:643px;font-size:12.5px;line-height:16px;color:#c4c4c4;letter-spacing:0.06px;">LuaConfig</span>
<div style="left:978px;top:642px;width:53px;height:23px;background:#515151;border-radius:3px;box-shadow:0 0 0 0.6px #2c2c2c"></div>
<span class="t" style="left:981.5px;top:646px;font-size:12.5px;line-height:16px;color:#e0e0e0;letter-spacing:-0.26px;">New</span>
<svg style="left:1018px;top:651px;" width="8" height="5" viewBox="0 0 8 5"><path d="M0.3 0.3 H7.7 L4 4.7Z" fill="#c4c4c4"/></svg>
<div style="left:4px;top:667px;width:1067px;height:2px;background:#242424;"></div>
<span class="t" style="left:5.5px;top:680px;font-size:12.5px;line-height:16px;color:#c4c4c4;letter-spacing:-0.10px;">PAction节点选择:</span>
<div style="left:107px;top:678px;width:160px;height:19.3px;background:#585858;border-radius:3px;box-shadow:0 0 0 0.6px #2c2c2c"></div>
<span class="t" style="left:113.5px;top:679.5px;font-size:12.5px;line-height:16px;color:#e0e0e0;letter-spacing:-0.08px;">PActionPlayAnim <b>播放动画</b></span>
<div style="left:275px;top:676px;width:111px;height:23px;background:#585858;border-radius:3px;box-shadow:0 0 0 0.6px #2c2c2c;"></div><span class="t" style="left:282.0px;top:679.5px;font-size:12.5px;line-height:16px;color:#e0e0e0;letter-spacing:-0.00px;">新增PActionNode</span>
<div style="left:394px;top:676px;width:60.2px;height:23px;background:#585858;border-radius:3px;box-shadow:0 0 0 0.6px #2c2c2c;"></div><span class="t" style="left:400.6px;top:679.5px;font-size:12.5px;line-height:16px;color:#e0e0e0;letter-spacing:-0.04px;">SaveBtn</span>
<div style="left:462px;top:676px;width:130.2px;height:23px;background:#585858;border-radius:3px;box-shadow:0 0 0 0.6px #2c2c2c;"></div><span class="t" style="left:468.4px;top:679.5px;font-size:12.5px;line-height:16px;color:#e0e0e0;letter-spacing:0.25px;">CreateTestModelBtn</span>
<span class="t" style="left:600.5px;top:677px;font-size:12.5px;line-height:16px;color:#c4c4c4;letter-spacing:0.03px;">CreateModelID:</span>
<div style="left:721px;top:675px;width:9px;height:25px;background:#2a2a2a;border-radius:3px;border:1px solid #1f1f1f"></div>
<div style="left:737px;top:676px;width:82px;height:23.2px;background:#585858;border-radius:3px;box-shadow:0 0 0 0.6px #2c2c2c;"></div><span class="t" style="left:743.2px;top:679.6px;font-size:12.5px;line-height:16px;color:#e0e0e0;letter-spacing:0.00px;">选择ModelId</span>
<div style="left:4px;top:701px;width:1067px;height:2px;background:#242424;"></div>
<div style="left:3px;top:705px;width:22px;height:25px;background:#585858;border-radius:3px;box-shadow:0 0 0 0.6px #2c2c2c"></div>
<div style="left:33px;top:705px;width:23px;height:25px;background:#585858;border-radius:3px;box-shadow:0 0 0 0.6px #2c2c2c"></div>
<div style="left:64px;top:705px;width:22px;height:25px;background:#585858;border-radius:3px;box-shadow:0 0 0 0.6px #2c2c2c"></div>
<span class="t" style="left:9.5px;top:709px;font-size:14px;line-height:16px;color:#e0e0e0;">&lt;</span>
<svg style="left:40px;top:712px;" width="9" height="10" viewBox="0 0 9 10"><path d="M0.5 0.5 L8.5 5 L0.5 9.5Z" fill="#e8e8e8"/></svg>
<span class="t" style="left:70.5px;top:709px;font-size:14px;line-height:16px;color:#e0e0e0;">&gt;</span>
<div style="left:99px;top:708px;width:40px;height:20px;background:#2a2a2a;border-radius:3px;border:1px solid #1f1f1f"></div>
<span class="t" style="left:102.5px;top:710px;font-size:12.5px;line-height:16px;color:#c0c0c0;letter-spacing:-1.20px;">-1</span>
<span class="t" style="left:143.5px;top:708px;font-size:15px;line-height:18px;color:#c4c4c4;">/</span>
<div style="left:154px;top:708px;width:40px;height:20px;background:#2a2a2a;border-radius:3px;border:1px solid #1f1f1f"></div>
<span class="t" style="left:157.5px;top:710px;font-size:12.5px;line-height:16px;color:#d2d2d2;letter-spacing:0.06px;">3032</span>
<div style="left:197.4px;top:703px;width:1.9px;height:191px;background:#2a2a2a;"></div>
<div style="left:305px;top:727px;width:2px;height:5px;background:#e8e8e8;"></div>
<div style="left:510px;top:727px;width:2px;height:5px;background:#e8e8e8;"></div>
<div style="left:715px;top:727px;width:2px;height:5px;background:#e8e8e8;"></div>
<div style="left:920px;top:727px;width:2px;height:5px;background:#e8e8e8;"></div>
<div style="left:3px;top:732px;width:194px;height:36px;background:#585858;border-top:1px solid #3c3c3c"></div>
<div style="left:7px;top:734px;width:33px;height:33px;background:#585858;border-radius:3px;border:1px solid #2e2e2e"></div>
<span class="t" style="left:14.5px;top:743px;font-size:12.5px;line-height:16px;color:#e0e0e0;letter-spacing:-0.13px;">Del</span>
<span class="t" style="left:40px;top:742px;width:121px;text-align:center;font-size:14.5px;line-height:18px;color:#d8d8d8">2</span>
<div style="left:3px;top:768px;width:194px;height:36px;background:#585858;border-top:1px solid #3c3c3c"></div>
<div style="left:7px;top:770px;width:33px;height:33px;background:#585858;border-radius:3px;border:1px solid #2e2e2e"></div>
<span class="t" style="left:14.5px;top:779px;font-size:12.5px;line-height:16px;color:#e0e0e0;letter-spacing:-0.13px;">Del</span>
<span class="t" style="left:40px;top:778px;width:121px;text-align:center;font-size:14.5px;line-height:18px;color:#d8d8d8">3</span>
<div style="left:3px;top:804px;width:194px;height:36px;background:#585858;border-top:1px solid #3c3c3c"></div>
<div style="left:7px;top:806px;width:33px;height:33px;background:#585858;border-radius:3px;border:1px solid #2e2e2e"></div>
<span class="t" style="left:14.5px;top:815px;font-size:12.5px;line-height:16px;color:#e0e0e0;letter-spacing:-0.13px;">Del</span>
<span class="t" style="left:40px;top:814px;width:121px;text-align:center;font-size:14.5px;line-height:18px;color:#d8d8d8">4</span>
<div style="left:3px;top:840px;width:194px;height:36px;background:#585858;border-top:1px solid #3c3c3c"></div>
<div style="left:7px;top:842px;width:33px;height:33px;background:#585858;border-radius:3px;border:1px solid #2e2e2e"></div>
<span class="t" style="left:14.5px;top:851px;font-size:12.5px;line-height:16px;color:#e0e0e0;letter-spacing:-0.13px;">Del</span>
<span class="t" style="left:41.5px;top:850px;font-size:14.5px;line-height:18px;color:#d8d8d8;letter-spacing:0.56px;">PActionPlayAnim</span>
<div style="left:209px;top:732px;width:849px;height:36px;background:#595959;border-top:1px solid #303030"></div>
<div style="left:209px;top:733px;width:96px;height:35px;background:#5e9aa2;"></div>
<div style="left:305px;top:733px;width:1px;height:35px;background:#2c2c2c;"></div>
<div style="left:209px;top:732px;width:97px;height:38px;overflow:hidden"><span class="t" style="left:-6px;top:0px;font-size:14.5px;line-height:19px;color:#ffffff;font-weight:bold;letter-spacing:0.48px;">erateLookFor</span><span class="t" style="left:-3px;top:19px;font-size:15.5px;line-height:19px;color:#ffffff;font-weight:bold;letter-spacing:0.16px;"><span style="font-weight:normal">看向前方</span></span></div>
<div style="left:209px;top:768px;width:849px;height:36px;background:#595959;border-top:1px solid #303030"></div>
<div style="left:252px;top:769px;width:204px;height:35px;background:#5e9aa2;"></div>
<div style="left:252px;top:769px;width:2.2px;height:35px;background:#0bf20b;"></div>
<div style="left:252px;top:757px;width:204px;height:47px;overflow:hidden"><span class="t" style="left:2.0px;top:1px;font-size:14.5px;line-height:19px;color:#ffffff;font-weight:bold;letter-spacing:0.44px;">PActionChangeMaterialByS</span><span class="t" style="left:6.0px;top:20.5px;font-size:14.5px;line-height:19px;color:#ffffff;font-weight:bold;letter-spacing:0.72px;">hader <span style="font-weight:normal">通过</span>Shader<span style="font-weight:normal">更换材质</span></span><span class="t" style="left:95.0px;top:40px;font-size:14.5px;line-height:19px;color:#ffffff;font-weight:bold;letter-spacing:0.00px;"><span style="font-weight:normal">球</span></span></div>
<div style="left:209px;top:804px;width:849px;height:36px;background:#595959;border-top:1px solid #303030"></div>
<div style="left:377px;top:805px;width:335px;height:35px;background:#5e9aa2;"></div>
<div style="left:377px;top:805px;width:2.2px;height:35px;background:#0bf20b;"></div>
<span class="t" style="left:448.5px;top:814px;font-size:14.5px;line-height:19px;color:#ffffff;font-weight:bold;letter-spacing:0.54px;">PActionPlayAnim 播放动画</span>
<div style="left:209px;top:840px;width:849px;height:36px;background:#595959;border-top:1px solid #303030"></div>
<div style="left:342px;top:841px;width:204px;height:35px;background:#62d8e8;"></div>
<div style="left:342px;top:841px;width:2.2px;height:35px;background:#0bf20b;"></div>
<span class="t" style="left:347.5px;top:850px;font-size:14.5px;line-height:19px;color:#f2e21c;font-weight:bold;letter-spacing:0.59px;">PActionPlayAnim 播放动画</span>
<div style="left:1059px;top:733px;width:12px;height:161px;background:#353535;"></div>
<svg style="left:1061.5px;top:738px;" width="8" height="5" viewBox="0 0 8 5"><path d="M0.3 4.7 H7.7 L4 0.3Z" fill="#d0d0d0"/></svg>
<div style="left:1060px;top:750px;width:10px;height:160px;background:#5f5f5f;border-radius:5px"></div>
<div style="left:1078px;top:64px;width:183px;height:19px;background:#282828;"></div>
<div style="left:1261px;top:64px;width:2px;height:830px;background:#191919;"></div>
<div style="left:1078px;top:83px;width:183px;height:811px;background:#383838;"></div>
<div style="left:1078px;top:64px;width:81px;height:19px;background:#3c3c3c;border-radius:3px 3px 0 0"></div>
<svg style="left:1085.5px;top:69.5px;" width="13" height="10" viewBox="0 0 13 10"><path d="M0.3 1 Q0.3 0.2 1.1 0.2 H4.8 L6 1.8 H11.6 Q12.4 1.8 12.4 2.6 V9 Q12.4 9.8 11.6 9.8 H1.1 Q0.3 9.8 0.3 9Z" fill="#c4c4c4"/></svg>
<span class="t" style="left:1102.5px;top:66.5px;font-size:12px;line-height:16px;color:#c4c4c4;letter-spacing:0.36px;">Project</span>
<svg style="left:1226px;top:68px;" width="10" height="11" viewBox="0 0 10 11"><path d="M2.5 5 V3.2 A2.3 2.3 0 0 1 7 2.6" fill="none" stroke="#c4c4c4" stroke-width="1.3"/><rect x="1.2" y="5.2" width="7.6" height="4.6" rx="0.6" fill="none" stroke="#c4c4c4" stroke-width="1.3"/></svg>
<svg style="left:1246.5px;top:68.5px;" width="3" height="11" viewBox="0 0 3 11"><rect x="0" y="0.1" width="2.1" height="2.1" rx="0.3" fill="#c4c4c4"/><rect x="0" y="4" width="2.1" height="2.1" rx="0.3" fill="#c4c4c4"/><rect x="0" y="7.9" width="2.1" height="2.1" rx="0.3" fill="#c4c4c4"/></svg>
<div style="left:1078px;top:83px;width:183px;height:21px;background:#3c3c3c;border-bottom:1px solid #232323"></div>
<svg style="left:1085px;top:87px;" width="24" height="12" viewBox="0 0 24 12"><path d="M0 6 H12 M6 0 V12" stroke="#d0d0d0" stroke-width="1.9"/><path d="M16.5 4 H24 L20.2 8.6Z" fill="#c4c4c4"/></svg>
<div style="left:1123px;top:85px;width:83px;height:16px;background:#2a2a2a;border-radius:4px;border:1px solid #1f1f1f;overflow:hidden"><div style="left:65px;top:-1px;width:18px;height:16px;background:#3a3a3a;"></div></div>
<svg style="left:1128px;top:90px;" width="8" height="8" viewBox="0 0 8 8"><circle cx="3" cy="3" r="2.2" fill="none" stroke="#c4c4c4" stroke-width="1.2"/><path d="M4.6 4.6 L7.4 7.4" stroke="#c4c4c4" stroke-width="1.4"/></svg>
<svg style="left:1191px;top:87px;" width="12" height="12" viewBox="0 0 12 12"><path d="M3.5 3 V0.6 H11.4 V8.5 H9" fill="none" stroke="#c4c4c4" stroke-width="1.1"/><rect x="0.6" y="7.5" width="3.9" height="3.9" fill="none" stroke="#c4c4c4" stroke-width="1.1"/><path d="M4.5 7.5 L9 3 M5.8 3 H9 V6.2" fill="none" stroke="#c4c4c4" stroke-width="1.1"/></svg>
<div style="left:1208px;top:83px;width:1px;height:20px;background:#2c2c2c;"></div>
<div style="left:1234px;top:83px;width:1px;height:20px;background:#2c2c2c;"></div>
<svg style="left:1214px;top:86px;" width="14" height="13" viewBox="0 0 14 13"><rect x="2.5" y="0" width="5.5" height="5.5" fill="#c4c4c4"/><circle cx="4" cy="9.5" r="3.6" fill="#c4c4c4"/><path d="M10 4.5 L13.5 10.5 H7.2Z" fill="#c4c4c4"/></svg>
<svg style="left:1243px;top:88px;" width="9" height="10" viewBox="0 0 9 10"><path d="M3.8 0.5 H8.5 V5.2 L4.2 9.6 L0.2 5.4 Z" fill="#c4c4c4" transform="rotate(8 4.5 5)"/><circle cx="6.6" cy="2.6" r="0.9" fill="#3c3c3c"/></svg>
<div style="left:0;top:104px;width:1247.5px;height:790px;overflow:hidden"><div style="left:0;top:-104px;width:1800px;height:894px"><svg style="left:1082.0px;top:112.4px;" width="10" height="9" viewBox="0 0 10 9"><path d="M0.4 0.4 H9.6 L5 8.6Z" fill="#6e6e6e"/></svg><svg style="left:1095.5px;top:110.5px;" width="14" height="11" viewBox="0 0 14 11"><path d="M1 9.8 V1.8 Q1 1 1.8 1 H4.6 L5.8 2.6 H10.6 Q11.4 2.6 11.4 3.4 V4.4" fill="none" stroke="#c2c2c2" stroke-width="1.2" stroke-linejoin="round"/><path d="M1 10.4 L3.4 4.8 Q3.6 4.4 4.1 4.4 H13.3 Q14 4.4 13.8 5 L11.8 10 Q11.6 10.5 11 10.5 H1.2Z" fill="#c2c2c2"/></svg><span class="t" style="left:1113.5px;top:108px;font-size:12px;line-height:16px;color:#d2d2d2;font-weight:bold;letter-spacing:0.45px">Assets</span><svg style="left:1097.0px;top:127.5px;" width="8" height="9" viewBox="0 0 8 9"><path d="M0.4 0.4 L7.6 4.5 L0.4 8.6Z" fill="#6e6e6e"/></svg><svg style="left:1109.5px;top:126.5px;" width="13" height="11" viewBox="0 0 13 11"><path d="M0.5 1.8 Q0.5 0.8 1.5 0.8 H4.6 Q5.2 0.8 5.6 1.4 L6.2 2.4 H11.6 Q12.6 2.4 12.6 3.4 V9.6 Q12.6 10.6 11.6 10.6 H1.5 Q0.5 10.6 0.5 9.6Z" fill="#c2c2c2"/></svg><span class="t" style="left:1127.5px;top:124px;font-size:12px;line-height:16px;color:#d2d2d2;letter-spacing:0.35px">3rd</span><svg style="left:1097.0px;top:143.5px;" width="8" height="9" viewBox="0 0 8 9"><path d="M0.4 0.4 L7.6 4.5 L0.4 8.6Z" fill="#6e6e6e"/></svg><svg style="left:1109.5px;top:142.5px;" width="13" height="11" viewBox="0 0 13 11"><path d="M0.5 1.8 Q0.5 0.8 1.5 0.8 H4.6 Q5.2 0.8 5.6 1.4 L6.2 2.4 H11.6 Q12.6 2.4 12.6 3.4 V9.6 Q12.6 10.6 11.6 10.6 H1.5 Q0.5 10.6 0.5 9.6Z" fill="#c2c2c2"/></svg><span class="t" style="left:1127.5px;top:140px;font-size:12px;line-height:16px;color:#d2d2d2;letter-spacing:0.35px">AppIcon</span><svg style="left:1097.0px;top:159.5px;" width="8" height="9" viewBox="0 0 8 9"><path d="M0.4 0.4 L7.6 4.5 L0.4 8.6Z" fill="#6e6e6e"/></svg><svg style="left:1109.5px;top:158.5px;" width="13" height="11" viewBox="0 0 13 11"><path d="M0.5 1.8 Q0.5 0.8 1.5 0.8 H4.6 Q5.2 0.8 5.6 1.4 L6.2 2.4 H11.6 Q12.6 2.4 12.6 3.4 V9.6 Q12.6 10.6 11.6 10.6 H1.5 Q0.5 10.6 0.5 9.6Z" fill="#c2c2c2"/></svg><span class="t" style="left:1127.5px;top:156px;font-size:12px;line-height:16px;color:#d2d2d2;letter-spacing:0.35px">Code</span><svg style="left:1097.0px;top:175.5px;" width="8" height="9" viewBox="0 0 8 9"><path d="M0.4 0.4 L7.6 4.5 L0.4 8.6Z" fill="#6e6e6e"/></svg><svg style="left:1109.5px;top:174.5px;" width="13" height="11" viewBox="0 0 13 11"><path d="M0.5 1.8 Q0.5 0.8 1.5 0.8 H4.6 Q5.2 0.8 5.6 1.4 L6.2 2.4 H11.6 Q12.6 2.4 12.6 3.4 V9.6 Q12.6 10.6 11.6 10.6 H1.5 Q0.5 10.6 0.5 9.6Z" fill="#c2c2c2"/></svg><span class="t" style="left:1127.5px;top:172px;font-size:12px;line-height:16px;color:#d2d2d2;letter-spacing:0.35px">Content</span><svg style="left:1096.0px;top:192.4px;" width="10" height="9" viewBox="0 0 10 9"><path d="M0.4 0.4 H9.6 L5 8.6Z" fill="#6e6e6e"/></svg><svg style="left:1109.5px;top:190.5px;" width="14" height="11" viewBox="0 0 14 11"><path d="M1 9.8 V1.8 Q1 1 1.8 1 H4.6 L5.8 2.6 H10.6 Q11.4 2.6 11.4 3.4 V4.4" fill="none" stroke="#c2c2c2" stroke-width="1.2" stroke-linejoin="round"/><path d="M1 10.4 L3.4 4.8 Q3.6 4.4 4.1 4.4 H13.3 Q14 4.4 13.8 5 L11.8 10 Q11.6 10.5 11 10.5 H1.2Z" fill="#c2c2c2"/></svg><span class="t" style="left:1127.5px;top:188px;font-size:12px;line-height:16px;color:#d2d2d2;letter-spacing:0.35px">Editor</span><svg style="left:1111.0px;top:207.5px;" width="8" height="9" viewBox="0 0 8 9"><path d="M0.4 0.4 L7.6 4.5 L0.4 8.6Z" fill="#6e6e6e"/></svg><svg style="left:1123.5px;top:206.5px;" width="13" height="11" viewBox="0 0 13 11"><path d="M0.5 1.8 Q0.5 0.8 1.5 0.8 H4.6 Q5.2 0.8 5.6 1.4 L6.2 2.4 H11.6 Q12.6 2.4 12.6 3.4 V9.6 Q12.6 10.6 11.6 10.6 H1.5 Q0.5 10.6 0.5 9.6Z" fill="#c2c2c2"/></svg><span class="t" style="left:1141.5px;top:204px;font-size:12px;line-height:16px;color:#d2d2d2;letter-spacing:0.35px">Animation</span><svg style="left:1111.0px;top:223.5px;" width="8" height="9" viewBox="0 0 8 9"><path d="M0.4 0.4 L7.6 4.5 L0.4 8.6Z" fill="#6e6e6e"/></svg><svg style="left:1123.5px;top:222.5px;" width="13" height="11" viewBox="0 0 13 11"><path d="M0.5 1.8 Q0.5 0.8 1.5 0.8 H4.6 Q5.2 0.8 5.6 1.4 L6.2 2.4 H11.6 Q12.6 2.4 12.6 3.4 V9.6 Q12.6 10.6 11.6 10.6 H1.5 Q0.5 10.6 0.5 9.6Z" fill="#c2c2c2"/></svg><span class="t" style="left:1141.5px;top:220px;font-size:12px;line-height:16px;color:#d2d2d2;letter-spacing:0.35px">AssetImport</span><svg style="left:1111.0px;top:239.5px;" width="8" height="9" viewBox="0 0 8 9"><path d="M0.4 0.4 L7.6 4.5 L0.4 8.6Z" fill="#6e6e6e"/></svg><svg style="left:1123.5px;top:238.5px;" width="13" height="11" viewBox="0 0 13 11"><path d="M0.5 1.8 Q0.5 0.8 1.5 0.8 H4.6 Q5.2 0.8 5.6 1.4 L6.2 2.4 H11.6 Q12.6 2.4 12.6 3.4 V9.6 Q12.6 10.6 11.6 10.6 H1.5 Q0.5 10.6 0.5 9.6Z" fill="#c2c2c2"/></svg><span class="t" style="left:1141.5px;top:236px;font-size:12px;line-height:16px;color:#d2d2d2;letter-spacing:0.35px">AssetsLinkMap</span><svg style="left:1111.0px;top:255.5px;" width="8" height="9" viewBox="0 0 8 9"><path d="M0.4 0.4 L7.6 4.5 L0.4 8.6Z" fill="#6e6e6e"/></svg><svg style="left:1123.5px;top:254.5px;" width="13" height="11" viewBox="0 0 13 11"><path d="M0.5 1.8 Q0.5 0.8 1.5 0.8 H4.6 Q5.2 0.8 5.6 1.4 L6.2 2.4 H11.6 Q12.6 2.4 12.6 3.4 V9.6 Q12.6 10.6 11.6 10.6 H1.5 Q0.5 10.6 0.5 9.6Z" fill="#c2c2c2"/></svg><span class="t" style="left:1141.5px;top:252px;font-size:12px;line-height:16px;color:#d2d2d2;letter-spacing:0.35px">Common</span><svg style="left:1111.0px;top:271.5px;" width="8" height="9" viewBox="0 0 8 9"><path d="M0.4 0.4 L7.6 4.5 L0.4 8.6Z" fill="#6e6e6e"/></svg><svg style="left:1123.5px;top:270.5px;" width="13" height="11" viewBox="0 0 13 11"><path d="M0.5 1.8 Q0.5 0.8 1.5 0.8 H4.6 Q5.2 0.8 5.6 1.4 L6.2 2.4 H11.6 Q12.6 2.4 12.6 3.4 V9.6 Q12.6 10.6 11.6 10.6 H1.5 Q0.5 10.6 0.5 9.6Z" fill="#c2c2c2"/></svg><span class="t" style="left:1141.5px;top:268px;font-size:12px;line-height:16px;color:#d2d2d2;letter-spacing:0.35px">Data</span><svg style="left:1111.0px;top:287.5px;" width="8" height="9" viewBox="0 0 8 9"><path d="M0.4 0.4 L7.6 4.5 L0.4 8.6Z" fill="#6e6e6e"/></svg><svg style="left:1123.5px;top:286.5px;" width="13" height="11" viewBox="0 0 13 11"><path d="M0.5 1.8 Q0.5 0.8 1.5 0.8 H4.6 Q5.2 0.8 5.6 1.4 L6.2 2.4 H11.6 Q12.6 2.4 12.6 3.4 V9.6 Q12.6 10.6 11.6 10.6 H1.5 Q0.5 10.6 0.5 9.6Z" fill="#c2c2c2"/></svg><span class="t" style="left:1141.5px;top:284px;font-size:12px;line-height:16px;color:#d2d2d2;letter-spacing:0.35px">ExportTool</span><svg style="left:1111.0px;top:303.5px;" width="8" height="9" viewBox="0 0 8 9"><path d="M0.4 0.4 L7.6 4.5 L0.4 8.6Z" fill="#6e6e6e"/></svg><svg style="left:1123.5px;top:302.5px;" width="13" height="11" viewBox="0 0 13 11"><path d="M0.5 1.8 Q0.5 0.8 1.5 0.8 H4.6 Q5.2 0.8 5.6 1.4 L6.2 2.4 H11.6 Q12.6 2.4 12.6 3.4 V9.6 Q12.6 10.6 11.6 10.6 H1.5 Q0.5 10.6 0.5 9.6Z" fill="#c2c2c2"/></svg><span class="t" style="left:1141.5px;top:300px;font-size:12px;line-height:16px;color:#d2d2d2;letter-spacing:0.35px">Guide</span><svg style="left:1111.0px;top:319.5px;" width="8" height="9" viewBox="0 0 8 9"><path d="M0.4 0.4 L7.6 4.5 L0.4 8.6Z" fill="#6e6e6e"/></svg><svg style="left:1123.5px;top:318.5px;" width="13" height="11" viewBox="0 0 13 11"><path d="M0.5 1.8 Q0.5 0.8 1.5 0.8 H4.6 Q5.2 0.8 5.6 1.4 L6.2 2.4 H11.6 Q12.6 2.4 12.6 3.4 V9.6 Q12.6 10.6 11.6 10.6 H1.5 Q0.5 10.6 0.5 9.6Z" fill="#c2c2c2"/></svg><span class="t" style="left:1141.5px;top:316px;font-size:12px;line-height:16px;color:#d2d2d2;letter-spacing:0.35px">Map</span><svg style="left:1110.0px;top:336.4px;" width="10" height="9" viewBox="0 0 10 9"><path d="M0.4 0.4 H9.6 L5 8.6Z" fill="#6e6e6e"/></svg><svg style="left:1123.5px;top:334.5px;" width="14" height="11" viewBox="0 0 14 11"><path d="M1 9.8 V1.8 Q1 1 1.8 1 H4.6 L5.8 2.6 H10.6 Q11.4 2.6 11.4 3.4 V4.4" fill="none" stroke="#c2c2c2" stroke-width="1.2" stroke-linejoin="round"/><path d="M1 10.4 L3.4 4.8 Q3.6 4.4 4.1 4.4 H13.3 Q14 4.4 13.8 5 L11.8 10 Q11.6 10.5 11 10.5 H1.2Z" fill="#c2c2c2"/></svg><span class="t" style="left:1141.5px;top:332px;font-size:12px;line-height:16px;color:#d2d2d2;letter-spacing:0.35px">PActionEditor</span><svg style="left:1125.0px;top:351.5px;" width="8" height="9" viewBox="0 0 8 9"><path d="M0.4 0.4 L7.6 4.5 L0.4 8.6Z" fill="#6e6e6e"/></svg><svg style="left:1137.5px;top:350.5px;" width="13" height="11" viewBox="0 0 13 11"><path d="M0.5 1.8 Q0.5 0.8 1.5 0.8 H4.6 Q5.2 0.8 5.6 1.4 L6.2 2.4 H11.6 Q12.6 2.4 12.6 3.4 V9.6 Q12.6 10.6 11.6 10.6 H1.5 Q0.5 10.6 0.5 9.6Z" fill="#c2c2c2"/></svg><span class="t" style="left:1155.5px;top:348px;font-size:12px;line-height:16px;color:#d2d2d2;letter-spacing:0.35px">Config</span><svg style="left:1125.0px;top:367.5px;" width="8" height="9" viewBox="0 0 8 9"><path d="M0.4 0.4 L7.6 4.5 L0.4 8.6Z" fill="#6e6e6e"/></svg><svg style="left:1137.5px;top:366.5px;" width="13" height="11" viewBox="0 0 13 11"><path d="M0.5 1.8 Q0.5 0.8 1.5 0.8 H4.6 Q5.2 0.8 5.6 1.4 L6.2 2.4 H11.6 Q12.6 2.4 12.6 3.4 V9.6 Q12.6 10.6 11.6 10.6 H1.5 Q0.5 10.6 0.5 9.6Z" fill="#c2c2c2"/></svg><span class="t" style="left:1155.5px;top:364px;font-size:12px;line-height:16px;color:#d2d2d2;letter-spacing:0.35px">ConfigScripts</span><svg style="left:1124.0px;top:384.4px;" width="10" height="9" viewBox="0 0 10 9"><path d="M0.4 0.4 H9.6 L5 8.6Z" fill="#6e6e6e"/></svg><svg style="left:1137.5px;top:382.5px;" width="14" height="11" viewBox="0 0 14 11"><path d="M1 9.8 V1.8 Q1 1 1.8 1 H4.6 L5.8 2.6 H10.6 Q11.4 2.6 11.4 3.4 V4.4" fill="none" stroke="#c2c2c2" stroke-width="1.2" stroke-linejoin="round"/><path d="M1 10.4 L3.4 4.8 Q3.6 4.4 4.1 4.4 H13.3 Q14 4.4 13.8 5 L11.8 10 Q11.6 10.5 11 10.5 H1.2Z" fill="#c2c2c2"/></svg><span class="t" style="left:1155.5px;top:380px;font-size:12px;line-height:16px;color:#d2d2d2;letter-spacing:0.35px">Track</span><svg style="left:1138.0px;top:400.4px;" width="10" height="9" viewBox="0 0 10 9"><path d="M0.4 0.4 H9.6 L5 8.6Z" fill="#6e6e6e"/></svg><svg style="left:1151.5px;top:398.5px;" width="14" height="11" viewBox="0 0 14 11"><path d="M1 9.8 V1.8 Q1 1 1.8 1 H4.6 L5.8 2.6 H10.6 Q11.4 2.6 11.4 3.4 V4.4" fill="none" stroke="#c2c2c2" stroke-width="1.2" stroke-linejoin="round"/><path d="M1 10.4 L3.4 4.8 Q3.6 4.4 4.1 4.4 H13.3 Q14 4.4 13.8 5 L11.8 10 Q11.6 10.5 11 10.5 H1.2Z" fill="#c2c2c2"/></svg><span class="t" style="left:1169.5px;top:396px;font-size:12px;line-height:16px;color:#d2d2d2;letter-spacing:0.35px">Chunk</span><svg style="left:1166.3px;top:414px;" width="12" height="13" viewBox="0 0 12 13"><path d="M0.4 0 H8.2 L11.8 3.6 V12.6 H0.4Z" fill="#f4f4f4"/><path d="M8.2 0 V3.6 H11.8Z" fill="#b8b8b8"/><path d="M4 5 L2 7.2 L4 9.4 M8.2 5 L10.2 7.2 L8.2 9.4" stroke="#c0201e" stroke-width="1.2" fill="none"/><path d="M6.9 4.4 L5.3 10" stroke="#c0201e" stroke-width="1.1"/></svg><svg style="left:1153.0px;top:415.5px;" width="8" height="9" viewBox="0 0 8 9"><path d="M0.4 0.4 L7.6 4.5 L0.4 8.6Z" fill="#6e6e6e"/></svg><span class="t" style="left:1183.5px;top:412px;font-size:12px;line-height:16px;color:#d2d2d2;letter-spacing:0.35px">AnimationTrack</span><svg style="left:1152.3px;top:430px;" width="12" height="13" viewBox="0 0 12 13"><path d="M0.4 0 H8.2 L11.8 3.6 V12.6 H0.4Z" fill="#f4f4f4"/><path d="M8.2 0 V3.6 H11.8Z" fill="#b8b8b8"/><path d="M4.7 3.6 L4.1 10.6 M8 3.6 L7.4 10.6 M2.6 5.8 H9.9 M2.3 8.4 H9.6" stroke="#1f8a30" stroke-width="1.45" fill="none"/></svg><span class="t" style="left:1169.5px;top:428px;font-size:12px;line-height:16px;color:#d2d2d2;letter-spacing:0.35px">MainTrackItem</span><svg style="left:1152.3px;top:446px;" width="12" height="13" viewBox="0 0 12 13"><path d="M0.4 0 H8.2 L11.8 3.6 V12.6 H0.4Z" fill="#f4f4f4"/><path d="M8.2 0 V3.6 H11.8Z" fill="#b8b8b8"/><path d="M4.7 3.6 L4.1 10.6 M8 3.6 L7.4 10.6 M2.6 5.8 H9.9 M2.3 8.4 H9.6" stroke="#1f8a30" stroke-width="1.45" fill="none"/></svg><span class="t" style="left:1169.5px;top:444px;font-size:12px;line-height:16px;color:#d2d2d2;letter-spacing:0.35px">PActionTrackV</span><svg style="left:1152.3px;top:462px;" width="12" height="13" viewBox="0 0 12 13"><path d="M0.4 0 H8.2 L11.8 3.6 V12.6 H0.4Z" fill="#f4f4f4"/><path d="M8.2 0 V3.6 H11.8Z" fill="#b8b8b8"/><path d="M4 5 L2 7.2 L4 9.4 M8.2 5 L10.2 7.2 L8.2 9.4" stroke="#c0201e" stroke-width="1.2" fill="none"/><path d="M6.9 4.4 L5.3 10" stroke="#c0201e" stroke-width="1.1"/></svg><svg style="left:1139.0px;top:463.5px;" width="8" height="9" viewBox="0 0 8 9"><path d="M0.4 0.4 L7.6 4.5 L0.4 8.6Z" fill="#6e6e6e"/></svg><span class="t" style="left:1169.5px;top:460px;font-size:12px;line-height:16px;color:#d2d2d2;letter-spacing:0.35px">SingleLineTrack</span><svg style="left:1152.3px;top:478px;" width="12" height="13" viewBox="0 0 12 13"><path d="M0.4 0 H8.2 L11.8 3.6 V12.6 H0.4Z" fill="#f4f4f4"/><path d="M8.2 0 V3.6 H11.8Z" fill="#b8b8b8"/><path d="M4 5 L2 7.2 L4 9.4 M8.2 5 L10.2 7.2 L8.2 9.4" stroke="#c0201e" stroke-width="1.2" fill="none"/><path d="M6.9 4.4 L5.3 10" stroke="#c0201e" stroke-width="1.1"/></svg><svg style="left:1139.0px;top:479.5px;" width="8" height="9" viewBox="0 0 8 9"><path d="M0.4 0.4 L7.6 4.5 L0.4 8.6Z" fill="#6e6e6e"/></svg><span class="t" style="left:1169.5px;top:476px;font-size:12px;line-height:16px;color:#d2d2d2;letter-spacing:0.35px">SingleLineTrack</span><svg style="left:1152.3px;top:494px;" width="12" height="13" viewBox="0 0 12 13"><path d="M0.4 0 H8.2 L11.8 3.6 V12.6 H0.4Z" fill="#f4f4f4"/><path d="M8.2 0 V3.6 H11.8Z" fill="#b8b8b8"/><path d="M4.7 3.6 L4.1 10.6 M8 3.6 L7.4 10.6 M2.6 5.8 H9.9 M2.3 8.4 H9.6" stroke="#1f8a30" stroke-width="1.45" fill="none"/></svg><span class="t" style="left:1169.5px;top:492px;font-size:12px;line-height:16px;color:#d2d2d2;letter-spacing:0.35px">SingleLineTrack</span><svg style="left:1152.3px;top:510px;" width="12" height="13" viewBox="0 0 12 13"><path d="M0.4 0 H8.2 L11.8 3.6 V12.6 H0.4Z" fill="#f4f4f4"/><path d="M8.2 0 V3.6 H11.8Z" fill="#b8b8b8"/><path d="M4.7 3.6 L4.1 10.6 M8 3.6 L7.4 10.6 M2.6 5.8 H9.9 M2.3 8.4 H9.6" stroke="#1f8a30" stroke-width="1.45" fill="none"/></svg><span class="t" style="left:1169.5px;top:508px;font-size:12px;line-height:16px;color:#d2d2d2;letter-spacing:0.35px">TrackItem</span><svg style="left:1152.3px;top:526px;" width="12" height="13" viewBox="0 0 12 13"><path d="M0.4 0 H8.2 L11.8 3.6 V12.6 H0.4Z" fill="#f4f4f4"/><path d="M8.2 0 V3.6 H11.8Z" fill="#b8b8b8"/><path d="M4.7 3.6 L4.1 10.6 M8 3.6 L7.4 10.6 M2.6 5.8 H9.9 M2.3 8.4 H9.6" stroke="#1f8a30" stroke-width="1.45" fill="none"/></svg><span class="t" style="left:1169.5px;top:524px;font-size:12px;line-height:16px;color:#d2d2d2;letter-spacing:0.35px">TrackItemBase</span><svg style="left:1152.3px;top:542px;" width="12" height="13" viewBox="0 0 12 13"><path d="M0.4 0 H8.2 L11.8 3.6 V12.6 H0.4Z" fill="#f4f4f4"/><path d="M8.2 0 V3.6 H11.8Z" fill="#b8b8b8"/><path d="M4.7 3.6 L4.1 10.6 M8 3.6 L7.4 10.6 M2.6 5.8 H9.9 M2.3 8.4 H9.6" stroke="#1f8a30" stroke-width="1.45" fill="none"/></svg><span class="t" style="left:1169.5px;top:540px;font-size:12px;line-height:16px;color:#d2d2d2;letter-spacing:0.35px">TrackItemStyle</span><svg style="left:1152.3px;top:558px;" width="12" height="13" viewBox="0 0 12 13"><path d="M0.4 0 H8.2 L11.8 3.6 V12.6 H0.4Z" fill="#f4f4f4"/><path d="M8.2 0 V3.6 H11.8Z" fill="#b8b8b8"/><path d="M4.7 3.6 L4.1 10.6 M8 3.6 L7.4 10.6 M2.6 5.8 H9.9 M2.3 8.4 H9.6" stroke="#1f8a30" stroke-width="1.45" fill="none"/></svg><span class="t" style="left:1169.5px;top:556px;font-size:12px;line-height:16px;color:#d2d2d2;letter-spacing:0.35px">TrackStyleBase</span><svg style="left:1152.3px;top:574px;" width="12" height="13" viewBox="0 0 12 13"><path d="M0.4 0 H8.2 L11.8 3.6 V12.6 H0.4Z" fill="#f4f4f4"/><path d="M8.2 0 V3.6 H11.8Z" fill="#b8b8b8"/><path d="M4.7 3.6 L4.1 10.6 M8 3.6 L7.4 10.6 M2.6 5.8 H9.9 M2.3 8.4 H9.6" stroke="#1f8a30" stroke-width="1.45" fill="none"/></svg><span class="t" style="left:1169.5px;top:572px;font-size:12px;line-height:16px;color:#d2d2d2;letter-spacing:0.35px">TrackViewBase</span><svg style="left:1124.0px;top:592.4px;" width="10" height="9" viewBox="0 0 10 9"><path d="M0.4 0.4 H9.6 L5 8.6Z" fill="#6e6e6e"/></svg><svg style="left:1137.5px;top:590.5px;" width="14" height="11" viewBox="0 0 14 11"><path d="M1 9.8 V1.8 Q1 1 1.8 1 H4.6 L5.8 2.6 H10.6 Q11.4 2.6 11.4 3.4 V4.4" fill="none" stroke="#c2c2c2" stroke-width="1.2" stroke-linejoin="round"/><path d="M1 10.4 L3.4 4.8 Q3.6 4.4 4.1 4.4 H13.3 Q14 4.4 13.8 5 L11.8 10 Q11.6 10.5 11 10.5 H1.2Z" fill="#c2c2c2"/></svg><span class="t" style="left:1155.5px;top:588px;font-size:12px;line-height:16px;color:#d2d2d2;letter-spacing:0.35px">View</span><svg style="left:1152.3px;top:606px;" width="12" height="13" viewBox="0 0 12 13"><path d="M0.4 0 H8.2 L11.8 3.6 V12.6 H0.4Z" fill="#f4f4f4"/><path d="M8.2 0 V3.6 H11.8Z" fill="#b8b8b8"/><path d="M4.7 3.6 L4.1 10.6 M8 3.6 L7.4 10.6 M2.6 5.8 H9.9 M2.3 8.4 H9.6" stroke="#1f8a30" stroke-width="1.45" fill="none"/></svg><span class="t" style="left:1169.5px;top:604px;font-size:12px;line-height:16px;color:#d2d2d2;letter-spacing:0.35px">AniControllerCo</span><svg style="left:1152.3px;top:622px;" width="12" height="13" viewBox="0 0 12 13"><path d="M0.4 0 H8.2 L11.8 3.6 V12.6 H0.4Z" fill="#f4f4f4"/><path d="M8.2 0 V3.6 H11.8Z" fill="#b8b8b8"/><path d="M4.7 3.6 L4.1 10.6 M8 3.6 L7.4 10.6 M2.6 5.8 H9.9 M2.3 8.4 H9.6" stroke="#1f8a30" stroke-width="1.45" fill="none"/></svg><span class="t" style="left:1169.5px;top:620px;font-size:12px;line-height:16px;color:#d2d2d2;letter-spacing:0.35px">PActionEditor</span><svg style="left:1152.3px;top:638px;" width="12" height="13" viewBox="0 0 12 13"><path d="M0.4 0 H8.2 L11.8 3.6 V12.6 H0.4Z" fill="#f4f4f4"/><path d="M8.2 0 V3.6 H11.8Z" fill="#b8b8b8"/><path d="M5.2 3.8 C3.8 3.8 4.4 5.4 4.2 6.2 C4.1 6.8 3.4 7 3 7 C3.4 7 4.1 7.2 4.2 7.8 C4.4 8.6 3.8 10.2 5.2 10.2 M7.2 3.8 C8.6 3.8 8 5.4 8.2 6.2 C8.3 6.8 9 7 9.4 7 C9 7 8.3 7.2 8.2 7.8 C8 8.6 8.6 10.2 7.2 10.2" stroke="#c0201e" stroke-width="1.35" fill="none"/></svg><span class="t" style="left:1169.5px;top:636px;font-size:12px;line-height:16px;color:#d2d2d2;letter-spacing:0.35px">PActionEditor</span><svg style="left:1152.3px;top:654px;" width="12" height="13" viewBox="0 0 12 13"><path d="M0.4 0 H8.2 L11.8 3.6 V12.6 H0.4Z" fill="#f4f4f4"/><path d="M8.2 0 V3.6 H11.8Z" fill="#b8b8b8"/><path d="M4 5 L2 7.2 L4 9.4 M8.2 5 L10.2 7.2 L8.2 9.4" stroke="#c0201e" stroke-width="1.2" fill="none"/><path d="M6.9 4.4 L5.3 10" stroke="#c0201e" stroke-width="1.1"/></svg><svg style="left:1139.0px;top:655.5px;" width="8" height="9" viewBox="0 0 8 9"><path d="M0.4 0.4 L7.6 4.5 L0.4 8.6Z" fill="#6e6e6e"/></svg><span class="t" style="left:1169.5px;top:652px;font-size:12px;line-height:16px;color:#d2d2d2;letter-spacing:0.35px">PActionEditor</span><svg style="left:1152.3px;top:670px;" width="12" height="13" viewBox="0 0 12 13"><path d="M0.4 0 H8.2 L11.8 3.6 V12.6 H0.4Z" fill="#f4f4f4"/><path d="M8.2 0 V3.6 H11.8Z" fill="#b8b8b8"/><path d="M4.7 3.6 L4.1 10.6 M8 3.6 L7.4 10.6 M2.6 5.8 H9.9 M2.3 8.4 H9.6" stroke="#1f8a30" stroke-width="1.45" fill="none"/></svg><span class="t" style="left:1169.5px;top:668px;font-size:12px;line-height:16px;color:#d2d2d2;letter-spacing:0.35px">PActionEditorC</span><svg style="left:1152.3px;top:686px;" width="12" height="13" viewBox="0 0 12 13"><path d="M0.4 0 H8.2 L11.8 3.6 V12.6 H0.4Z" fill="#f4f4f4"/><path d="M8.2 0 V3.6 H11.8Z" fill="#b8b8b8"/><path d="M4.7 3.6 L4.1 10.6 M8 3.6 L7.4 10.6 M2.6 5.8 H9.9 M2.3 8.4 H9.6" stroke="#1f8a30" stroke-width="1.45" fill="none"/></svg><span class="t" style="left:1169.5px;top:684px;font-size:12px;line-height:16px;color:#d2d2d2;letter-spacing:0.35px">PActionEditorH</span><svg style="left:1152.3px;top:702px;" width="12" height="13" viewBox="0 0 12 13"><path d="M0.4 0 H8.2 L11.8 3.6 V12.6 H0.4Z" fill="#f4f4f4"/><path d="M8.2 0 V3.6 H11.8Z" fill="#b8b8b8"/><path d="M4.7 3.6 L4.1 10.6 M8 3.6 L7.4 10.6 M2.6 5.8 H9.9 M2.3 8.4 H9.6" stroke="#1f8a30" stroke-width="1.45" fill="none"/></svg><span class="t" style="left:1169.5px;top:700px;font-size:12px;line-height:16px;color:#d2d2d2;letter-spacing:0.35px">PActionLuaCo</span><svg style="left:1152.3px;top:718px;" width="12" height="13" viewBox="0 0 12 13"><path d="M0.4 0 H8.2 L11.8 3.6 V12.6 H0.4Z" fill="#f4f4f4"/><path d="M8.2 0 V3.6 H11.8Z" fill="#b8b8b8"/><path d="M4.7 3.6 L4.1 10.6 M8 3.6 L7.4 10.6 M2.6 5.8 H9.9 M2.3 8.4 H9.6" stroke="#1f8a30" stroke-width="1.45" fill="none"/></svg><span class="t" style="left:1169.5px;top:716px;font-size:12px;line-height:16px;color:#d2d2d2;letter-spacing:0.35px">PActionModel</span><svg style="left:1152.3px;top:734px;" width="12" height="13" viewBox="0 0 12 13"><path d="M0.4 0 H8.2 L11.8 3.6 V12.6 H0.4Z" fill="#f4f4f4"/><path d="M8.2 0 V3.6 H11.8Z" fill="#b8b8b8"/><path d="M4.7 3.6 L4.1 10.6 M8 3.6 L7.4 10.6 M2.6 5.8 H9.9 M2.3 8.4 H9.6" stroke="#1f8a30" stroke-width="1.45" fill="none"/></svg><span class="t" style="left:1169.5px;top:732px;font-size:12px;line-height:16px;color:#d2d2d2;letter-spacing:0.35px">PActionNodeC</span><svg style="left:1152.3px;top:750px;" width="12" height="13" viewBox="0 0 12 13"><path d="M0.4 0 H8.2 L11.8 3.6 V12.6 H0.4Z" fill="#f4f4f4"/><path d="M8.2 0 V3.6 H11.8Z" fill="#b8b8b8"/><path d="M4.7 3.6 L4.1 10.6 M8 3.6 L7.4 10.6 M2.6 5.8 H9.9 M2.3 8.4 H9.6" stroke="#1f8a30" stroke-width="1.45" fill="none"/></svg><span class="t" style="left:1169.5px;top:748px;font-size:12px;line-height:16px;color:#d2d2d2;letter-spacing:0.35px">PActionNodeP</span><svg style="left:1138.3px;top:766px;" width="12" height="13" viewBox="0 0 12 13"><path d="M0.4 0 H8.2 L11.8 3.6 V12.6 H0.4Z" fill="#f4f4f4"/><path d="M8.2 0 V3.6 H11.8Z" fill="#b8b8b8"/><path d="M2.6 5 H9.6 M2.6 7.2 H9.6 M2.6 9.4 H7.6" stroke="#8a8a8a" stroke-width="1.1"/></svg><span class="t" style="left:1155.5px;top:764px;font-size:12px;line-height:16px;color:#d2d2d2;letter-spacing:0.35px">时间轴实现说明-A</span><svg style="left:1111.0px;top:783.5px;" width="8" height="9" viewBox="0 0 8 9"><path d="M0.4 0.4 L7.6 4.5 L0.4 8.6Z" fill="#6e6e6e"/></svg><svg style="left:1123.5px;top:782.5px;" width="13" height="11" viewBox="0 0 13 11"><path d="M0.5 1.8 Q0.5 0.8 1.5 0.8 H4.6 Q5.2 0.8 5.6 1.4 L6.2 2.4 H11.6 Q12.6 2.4 12.6 3.4 V9.6 Q12.6 10.6 11.6 10.6 H1.5 Q0.5 10.6 0.5 9.6Z" fill="#c2c2c2"/></svg><span class="t" style="left:1141.5px;top:780px;font-size:12px;line-height:16px;color:#d2d2d2;letter-spacing:0.35px">PhysxTool</span><svg style="left:1111.0px;top:799.5px;" width="8" height="9" viewBox="0 0 8 9"><path d="M0.4 0.4 L7.6 4.5 L0.4 8.6Z" fill="#6e6e6e"/></svg><svg style="left:1123.5px;top:798.5px;" width="13" height="11" viewBox="0 0 13 11"><path d="M0.5 1.8 Q0.5 0.8 1.5 0.8 H4.6 Q5.2 0.8 5.6 1.4 L6.2 2.4 H11.6 Q12.6 2.4 12.6 3.4 V9.6 Q12.6 10.6 11.6 10.6 H1.5 Q0.5 10.6 0.5 9.6Z" fill="#c2c2c2"/></svg><span class="t" style="left:1141.5px;top:796px;font-size:12px;line-height:16px;color:#d2d2d2;letter-spacing:0.35px">Publish</span><svg style="left:1111.0px;top:815.5px;" width="8" height="9" viewBox="0 0 8 9"><path d="M0.4 0.4 L7.6 4.5 L0.4 8.6Z" fill="#6e6e6e"/></svg><svg style="left:1123.5px;top:814.5px;" width="13" height="11" viewBox="0 0 13 11"><path d="M0.5 1.8 Q0.5 0.8 1.5 0.8 H4.6 Q5.2 0.8 5.6 1.4 L6.2 2.4 H11.6 Q12.6 2.4 12.6 3.4 V9.6 Q12.6 10.6 11.6 10.6 H1.5 Q0.5 10.6 0.5 9.6Z" fill="#c2c2c2"/></svg><span class="t" style="left:1141.5px;top:812px;font-size:12px;line-height:16px;color:#d2d2d2;letter-spacing:0.35px">RecastTool</span><svg style="left:1111.0px;top:831.5px;" width="8" height="9" viewBox="0 0 8 9"><path d="M0.4 0.4 L7.6 4.5 L0.4 8.6Z" fill="#6e6e6e"/></svg><svg style="left:1123.5px;top:830.5px;" width="13" height="11" viewBox="0 0 13 11"><path d="M0.5 1.8 Q0.5 0.8 1.5 0.8 H4.6 Q5.2 0.8 5.6 1.4 L6.2 2.4 H11.6 Q12.6 2.4 12.6 3.4 V9.6 Q12.6 10.6 11.6 10.6 H1.5 Q0.5 10.6 0.5 9.6Z" fill="#c2c2c2"/></svg><span class="t" style="left:1141.5px;top:828px;font-size:12px;line-height:16px;color:#d2d2d2;letter-spacing:0.35px">Res</span><svg style="left:1111.0px;top:847.5px;" width="8" height="9" viewBox="0 0 8 9"><path d="M0.4 0.4 L7.6 4.5 L0.4 8.6Z" fill="#6e6e6e"/></svg><svg style="left:1123.5px;top:846.5px;" width="13" height="11" viewBox="0 0 13 11"><path d="M0.5 1.8 Q0.5 0.8 1.5 0.8 H4.6 Q5.2 0.8 5.6 1.4 L6.2 2.4 H11.6 Q12.6 2.4 12.6 3.4 V9.6 Q12.6 10.6 11.6 10.6 H1.5 Q0.5 10.6 0.5 9.6Z" fill="#c2c2c2"/></svg><span class="t" style="left:1141.5px;top:844px;font-size:12px;line-height:16px;color:#d2d2d2;letter-spacing:0.35px">RespawnArea</span><svg style="left:1111.0px;top:863.5px;" width="8" height="9" viewBox="0 0 8 9"><path d="M0.4 0.4 L7.6 4.5 L0.4 8.6Z" fill="#6e6e6e"/></svg><svg style="left:1123.5px;top:862.5px;" width="13" height="11" viewBox="0 0 13 11"><path d="M0.5 1.8 Q0.5 0.8 1.5 0.8 H4.6 Q5.2 0.8 5.6 1.4 L6.2 2.4 H11.6 Q12.6 2.4 12.6 3.4 V9.6 Q12.6 10.6 11.6 10.6 H1.5 Q0.5 10.6 0.5 9.6Z" fill="#c2c2c2"/></svg><span class="t" style="left:1141.5px;top:860px;font-size:12px;line-height:16px;color:#d2d2d2;letter-spacing:0.35px">Role</span><svg style="left:1111.0px;top:879.5px;" width="8" height="9" viewBox="0 0 8 9"><path d="M0.4 0.4 L7.6 4.5 L0.4 8.6Z" fill="#6e6e6e"/></svg><svg style="left:1123.5px;top:878.5px;" width="13" height="11" viewBox="0 0 13 11"><path d="M0.5 1.8 Q0.5 0.8 1.5 0.8 H4.6 Q5.2 0.8 5.6 1.4 L6.2 2.4 H11.6 Q12.6 2.4 12.6 3.4 V9.6 Q12.6 10.6 11.6 10.6 H1.5 Q0.5 10.6 0.5 9.6Z" fill="#c2c2c2"/></svg><span class="t" style="left:1141.5px;top:876px;font-size:12px;line-height:16px;color:#d2d2d2;letter-spacing:0.35px">StateActionRuleEd</span></div></div>
<div style="left:1248px;top:104px;width:13px;height:790px;background:#353535;"></div>
<svg style="left:1251.3px;top:110px;" width="8" height="5" viewBox="0 0 8 5"><path d="M0.3 4.7 H7.7 L4 0.3Z" fill="#d0d0d0"/></svg>
<div style="left:1250.5px;top:120px;width:9.5px;height:665px;background:#676767;border-radius:5px"></div>
<div style="left:1263px;top:64px;width:537px;height:19px;background:#282828;"></div>
<div style="left:1263px;top:83px;width:537px;height:811px;background:#383838;"></div>
<div style="left:1263px;top:64px;width:93px;height:19px;background:#3c3c3c;border-radius:3px 3px 0 0"></div>
<svg style="left:1272px;top:69px;" width="10" height="10" viewBox="0 0 10 10"><circle cx="5" cy="5" r="4.8" fill="#c4c4c4"/><rect x="4.1" y="4.2" width="1.8" height="3.8" fill="#3c3c3c"/><circle cx="5" cy="2.6" r="1" fill="#3c3c3c"/></svg>
<span class="t" style="left:1287.5px;top:66.5px;font-size:12px;line-height:16px;color:#c4c4c4;letter-spacing:0.27px;">Inspector</span>
<div style="left:1263px;top:83px;width:537px;height:56px;background:#3c3c3c;border-bottom:1px solid #1a1a1a"></div>
<svg style="left:1272px;top:91px;" width="30" height="29" viewBox="0 0 30 29"><path d="M11.5 1.5 L22 6.5 V13 M11.5 1.5 L1.5 6.5 V19 L11.5 24 V11.5 M1.5 6.5 L11.5 11.5 L22 6.5" fill="none" stroke="#62c9f5" stroke-width="1.7" stroke-linejoin="round"/><path d="M20.6 14.6 C18 14.6 18.9 17.2 18.7 18.8 C18.6 20 17.4 20.5 16.6 20.5 C17.4 20.5 18.6 21 18.7 22.2 C18.9 23.8 18 26.8 20.6 26.8 M23.8 14.6 C26.4 14.6 25.5 17.2 25.7 18.8 C25.8 20 27 20.5 27.8 20.5 C27 20.5 25.8 21 25.7 22.2 C25.5 23.8 26.4 26.8 23.8 26.8" fill="none" stroke="#f26a36" stroke-width="2.3"/></svg>
<span class="t" style="left:1314px;top:88.5px;font-size:12px;line-height:16px;color:#bdbdbd;letter-spacing:0.91px;">(P Action Editor)</span>
<span class="t" style="left:1797px;top:86px;font-size:12px;line-height:16px;color:#c4c4c4;">‹</span>
<span class="t" style="left:1282.5px;top:144px;font-size:11.7px;line-height:16px;color:#c4c4c4;">开始时间<span style="font-family:'Noto Sans CJK JP'">：</span></span>
<div style="left:1403px;top:142.5px;width:400px;height:18.3px;background:#2a2a2a;border-radius:3px;border:1px solid #212121;border-top-color:#161616"></div><span class="t" style="left:1407px;top:144px;font-size:12px;line-height:16px;color:#d2d2d2;letter-spacing:0.2px">1176</span>
<span class="t" style="left:1282.5px;top:165px;font-size:11.7px;line-height:16px;color:#c4c4c4;">结束时间<span style="font-family:'Noto Sans CJK JP'">：</span></span>
<div style="left:1403px;top:163.5px;width:400px;height:18.3px;background:#2a2a2a;border-radius:3px;border:1px solid #212121;border-top-color:#161616"></div><span class="t" style="left:1407px;top:165px;font-size:12px;line-height:16px;color:#d2d2d2;letter-spacing:0.2px">2176</span>
<span class="t" style="left:1282.5px;top:183.5px;font-size:12px;line-height:16px;color:#c4c4c4;letter-spacing:0.47px;">endNotAction:</span>
<div style="left:1403px;top:185px;width:14px;height:14px;background:#2a2a2a;border-radius:3px;border:1px solid #1f1f1f"></div>
<span class="t" style="left:1279.5px;top:203px;font-size:12px;line-height:16px;color:#d2d2d2;letter-spacing:0.21px;">Action类型</span>
<span class="t" style="left:1339px;top:203px;font-size:11.7px;line-height:16px;color:#d2d2d2;"><span style="font-family:'Noto Sans CJK JP'">：</span></span>
<span class="t" style="left:1351.6px;top:203px;font-size:12px;line-height:16px;color:#d2d2d2;letter-spacing:0.23px;">PActionPlayAnim <b>播放动画</b></span>
<span class="t" style="left:1282.5px;top:222.5px;font-size:12px;line-height:16px;color:#c4c4c4;letter-spacing:0.12px;">animNameData(状态机名（新版配置方式）)</span>
<div style="left:1526px;top:220.5px;width:400px;height:18.3px;background:#2a2a2a;border-radius:3px;border:1px solid #212121;border-top-color:#161616"></div>
<span class="t" style="left:1282.5px;top:243.5px;font-size:12px;line-height:16px;color:#c4c4c4;letter-spacing:0.21px;">triggerName(<b>动画</b>触发名称（与animNameData二选一）)</span>
<div style="left:1597px;top:241.5px;width:400px;height:18.3px;background:#2a2a2a;border-radius:3px;border:1px solid #212121;border-top-color:#161616"></div>
<span class="t" style="left:1282.5px;top:264.5px;font-size:12px;line-height:16px;color:#c4c4c4;letter-spacing:0.22px;">triggerLayerId(<b>动画</b>触发层级（必填）)</span>
<div style="left:1495px;top:262.5px;width:400px;height:18.3px;background:#2a2a2a;border-radius:3px;border:1px solid #212121;border-top-color:#161616"></div><span class="t" style="left:1499px;top:264px;font-size:12px;line-height:16px;color:#d2d2d2;letter-spacing:0.2px">0</span>
<span class="t" style="left:1282.5px;top:284px;font-size:12px;line-height:16px;color:#c4c4c4;letter-spacing:0.22px;">ignoreHideHandle(是否不隐藏手持物)</span>
<div style="left:1493px;top:285px;width:14px;height:14px;background:#2a2a2a;border-radius:3px;border:1px solid #1f1f1f"></div>
<span class="t" style="left:1282.5px;top:305px;font-size:12px;line-height:16px;color:#c4c4c4;letter-spacing:0.24px;">isEndAnimStopPAction(<b>播放</b>完<b>动</b>作结束pAction（新版配置方式）)</span>
<div style="left:1648px;top:306px;width:14px;height:14px;background:#2a2a2a;border-radius:3px;border:1px solid #1f1f1f"></div>
<span class="t" style="left:1282.5px;top:327.5px;font-size:12px;line-height:16px;color:#c4c4c4;letter-spacing:0.28px;">endTransitionTime(结束时过渡时间)</span>
<div style="left:1485px;top:325.5px;width:400px;height:18.3px;background:#2a2a2a;border-radius:3px;border:1px solid #212121;border-top-color:#161616"></div><span class="t" style="left:1489px;top:327px;font-size:12px;line-height:16px;color:#d2d2d2;letter-spacing:0.2px">0</span>
<div style="left:1282px;top:347px;width:520px;height:18px;background:#9e1c1c;border-radius:3px;border:1px solid #6a1212"></div>
<span class="t" style="left:1546.0px;top:349px;font-size:12px;line-height:16px;color:#e8cccc;letter-spacing:-0.02px;">删除</span>
<div style="left:1241px;top:86px;width:484px;height:307px;border:2px solid #ec1c24"></div>
</body></html>
